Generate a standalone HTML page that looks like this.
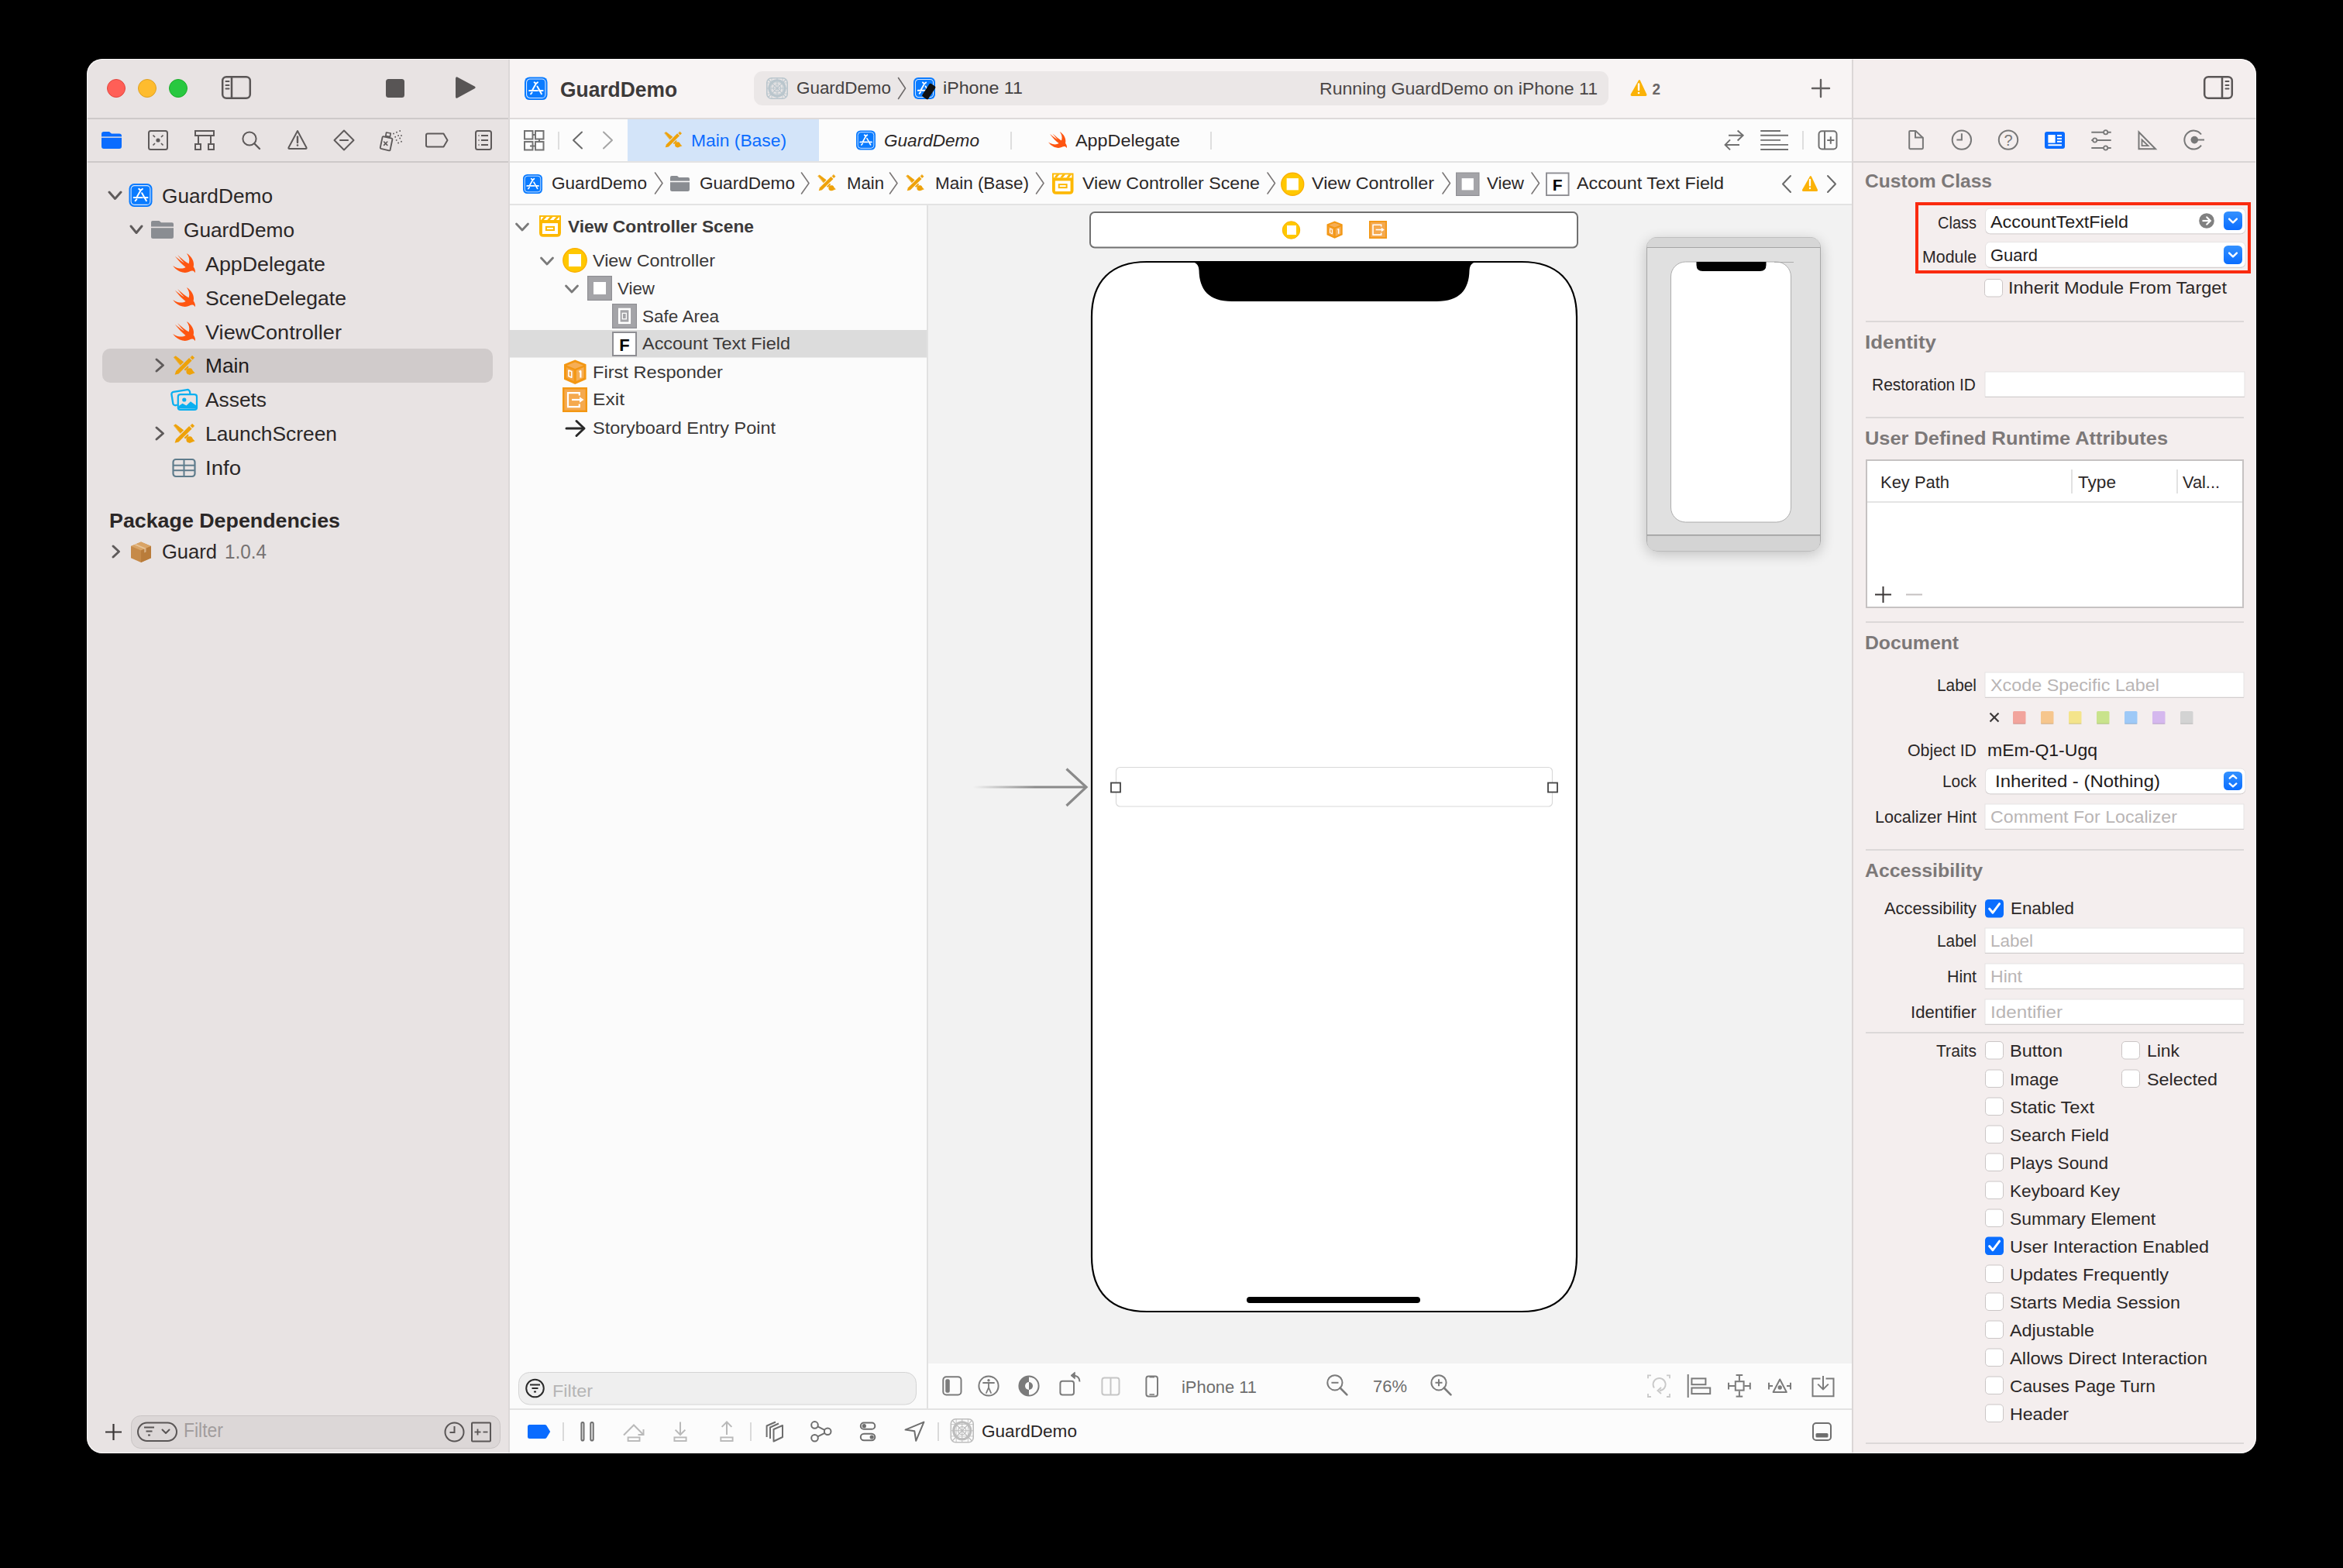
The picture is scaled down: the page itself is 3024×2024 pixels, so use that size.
<!DOCTYPE html><html><head><meta charset="utf-8"><style>
html,body{margin:0;padding:0;background:#000;width:3024px;height:2024px;overflow:hidden}
#win{position:absolute;left:0;top:0;width:3024px;height:2024px;clip-path:inset(76px 112px 148px 112px round 20px)}
svg{position:absolute;left:0;top:0}
text{font-family:"Liberation Sans",sans-serif;white-space:pre}
</style></head><body><div id="win">
<svg width="3024" height="2024" viewBox="0 0 3024 2024">
<defs><linearGradient id="bb" x1="0" y1="0" x2="0" y2="1"><stop offset="0" stop-color="#3391ff"/><stop offset="1" stop-color="#0a6dff"/></linearGradient></defs>
<rect x="112" y="76" width="546" height="1800" fill="#e8e3e3"/>
<rect x="656" y="76" width="2" height="1800" fill="#dcd8d8"/>
<rect x="112" y="152" width="544" height="2" fill="#cdc9c9"/>
<rect x="112" y="208" width="544" height="2" fill="#cdc9c9"/>
<rect x="658" y="76" width="1732" height="76" fill="#f8f4f4"/>
<rect x="658" y="152" width="1732" height="2" fill="#dedada"/>
<rect x="658" y="154" width="1732" height="54" fill="#fcfcfc"/>
<rect x="658" y="208" width="1732" height="2" fill="#e3e3e3"/>
<rect x="658" y="210" width="1732" height="53" fill="#fcfcfc"/>
<rect x="658" y="263" width="1732" height="2" fill="#e3e3e3"/>
<rect x="658" y="265" width="538" height="1553" fill="#fbfbfb"/>
<rect x="1196" y="265" width="2" height="1553" fill="#e1e1e1"/>
<rect x="1198" y="265" width="1192" height="1495" fill="#f2f2f2"/>
<rect x="1198" y="1760" width="1192" height="58" fill="#fcfcfc"/>
<rect x="658" y="1818" width="1732" height="2" fill="#e3e3e3"/>
<rect x="658" y="1820" width="1732" height="56" fill="#fcfcfc"/>
<rect x="2390" y="76" width="2" height="1800" fill="#dbd6d6"/>
<rect x="2392" y="76" width="520" height="1800" fill="#f4eeee"/>
<rect x="2392" y="152" width="520" height="2" fill="#d9d5d5"/>
<rect x="2392" y="208" width="520" height="2" fill="#d9d5d5"/>
<circle cx="150" cy="114" r="11.5" fill="#ff5f57" stroke="#e2463f" stroke-width="1"/>
<circle cx="190" cy="114" r="11.5" fill="#febc2e" stroke="#dfa123" stroke-width="1"/>
<circle cx="230" cy="114" r="11.5" fill="#28c840" stroke="#1dad2b" stroke-width="1"/>
<rect x="287.2" y="99.2" width="35.60000000000002" height="27.599999999999994" fill="none" stroke="#5a5656" stroke-width="2.5" rx="5"/>
<line x1="299" y1="100" x2="299" y2="126" stroke="#5a5656" stroke-width="2.5" stroke-linecap="butt"/>
<line x1="291.5" y1="105" x2="295.5" y2="105" stroke="#5a5656" stroke-width="2" stroke-linecap="round"/>
<line x1="291.5" y1="110" x2="295.5" y2="110" stroke="#5a5656" stroke-width="2" stroke-linecap="round"/>
<line x1="291.5" y1="114.5" x2="295.5" y2="114.5" stroke="#5a5656" stroke-width="2" stroke-linecap="round"/>
<rect x="498" y="102" width="24" height="24" fill="#585555" rx="3.5"/>
<path d="M590.2 99.6 L612.6 111.6 Q614.8 112.9 612.6 114.2 L590.2 126.4 Q588 127.6 588 125 L588 101.8 Q588 98.4 590.2 99.6 Z" fill="#585555"/>
<path d="M131 173 Q131 170 134 170 L141 170 L144 172.5 L154 172.5 Q157 172.5 157 175.5 L157 189 Q157 192 154 192 L134 192 Q131 192 131 189 Z" fill="#0a6cff"/>
<rect x="131" y="176.4" width="26" height="1.4000000000000057" fill="#e8e3e3"/>
<rect x="192" y="169" width="24" height="24" fill="none" stroke="#5e5a5a" stroke-width="2" rx="2.5"/>
<circle cx="204" cy="181" r="2.6" fill="#5e5a5a"/>
<line x1="197.5" y1="174.5" x2="200" y2="177" stroke="#5e5a5a" stroke-width="1.7" stroke-linecap="butt"/>
<line x1="210.5" y1="174.5" x2="208" y2="177" stroke="#5e5a5a" stroke-width="1.7" stroke-linecap="butt"/>
<line x1="197.5" y1="187.5" x2="200" y2="185" stroke="#5e5a5a" stroke-width="1.7" stroke-linecap="butt"/>
<line x1="210.5" y1="187.5" x2="208" y2="185" stroke="#5e5a5a" stroke-width="1.7" stroke-linecap="butt"/>
<rect x="252" y="169" width="24" height="6" fill="none" stroke="#5e5a5a" stroke-width="2"/>
<line x1="256" y1="175" x2="256" y2="185" stroke="#5e5a5a" stroke-width="2" stroke-linecap="butt"/>
<line x1="272" y1="175" x2="272" y2="185" stroke="#5e5a5a" stroke-width="2" stroke-linecap="butt"/>
<rect x="252" y="186" width="7" height="7" fill="none" stroke="#5e5a5a" stroke-width="2"/>
<rect x="269" y="186" width="7" height="7" fill="none" stroke="#5e5a5a" stroke-width="2"/>
<circle cx="322" cy="179" r="8.6" fill="none" stroke="#5e5a5a" stroke-width="2"/>
<line x1="328.5" y1="185.5" x2="335" y2="192" stroke="#5e5a5a" stroke-width="2.4" stroke-linecap="round"/>
<path d="M384 169 L395.5 190.5 Q396 192 394.5 192 L373.5 192 Q372 192 372.5 190.5 Z" fill="none" stroke="#5e5a5a" stroke-width="2" stroke-linecap="round" stroke-linejoin="round"/>
<line x1="384" y1="176.5" x2="384" y2="184" stroke="#5e5a5a" stroke-width="2.4" stroke-linecap="round"/>
<circle cx="384" cy="187.5" r="1.3" fill="#5e5a5a"/>
<path d="M444 168.5 L456.5 181 L444 193.5 L431.5 181 Z" fill="none" stroke="#5e5a5a" stroke-width="2" stroke-linecap="round" stroke-linejoin="round"/>
<line x1="439" y1="181" x2="449" y2="181" stroke="#5e5a5a" stroke-width="2.2" stroke-linecap="round"/>
<path d="M495.2 176.2 L505.6 178.6 Q506.6 178.9 506.4 180 L503.6 193.4 Q503.3 194.6 502.1 194.3 L491.7 191.9 Q490.6 191.6 490.8 190.5 L493.6 177.1 Q493.9 175.9 495.2 176.2 Z" fill="none" stroke="#5e5a5a" stroke-width="1.9" stroke-linecap="round" stroke-linejoin="round"/>
<path d="M498.6 171 L504.2 172 L503.4 176.6 L497.8 175.6 Z" fill="none" stroke="#5e5a5a" stroke-width="1.7" stroke-linecap="round" stroke-linejoin="round"/>
<line x1="495.6" y1="183" x2="499.8" y2="187.4" stroke="#5e5a5a" stroke-width="1.6" stroke-linecap="round"/>
<line x1="499.8" y1="183" x2="495.6" y2="187.4" stroke="#5e5a5a" stroke-width="1.6" stroke-linecap="round"/>
<circle cx="508" cy="172.5" r="0.95" fill="#5e5a5a"/>
<circle cx="512" cy="170.8" r="0.95" fill="#5e5a5a"/>
<circle cx="516.2" cy="169" r="0.95" fill="#5e5a5a"/>
<circle cx="514.1" cy="175" r="0.95" fill="#5e5a5a"/>
<circle cx="518" cy="175" r="0.95" fill="#5e5a5a"/>
<circle cx="510.2" cy="176.7" r="0.95" fill="#5e5a5a"/>
<circle cx="516.2" cy="178.5" r="0.95" fill="#5e5a5a"/>
<circle cx="511.7" cy="180.9" r="0.95" fill="#5e5a5a"/>
<circle cx="518" cy="182.7" r="0.95" fill="#5e5a5a"/>
<circle cx="514.1" cy="184.5" r="0.95" fill="#5e5a5a"/>
<path d="M550 174.5 Q550 172.5 552 172.5 L572.5 172.5 L577.5 181 L572.5 189.5 L552 189.5 Q550 189.5 550 187.5 Z" fill="none" stroke="#5e5a5a" stroke-width="2" stroke-linecap="round" stroke-linejoin="round"/>
<rect x="614" y="169" width="20" height="24" fill="none" stroke="#5e5a5a" stroke-width="2" rx="2.5"/>
<line x1="617.5" y1="175" x2="618.5" y2="175" stroke="#5e5a5a" stroke-width="2" stroke-linecap="butt"/>
<line x1="621" y1="175" x2="630" y2="175" stroke="#5e5a5a" stroke-width="2" stroke-linecap="butt"/>
<line x1="617.5" y1="181" x2="618.5" y2="181" stroke="#5e5a5a" stroke-width="2" stroke-linecap="butt"/>
<line x1="621" y1="181" x2="630" y2="181" stroke="#5e5a5a" stroke-width="2" stroke-linecap="butt"/>
<line x1="617.5" y1="187" x2="618.5" y2="187" stroke="#5e5a5a" stroke-width="2" stroke-linecap="butt"/>
<line x1="621" y1="187" x2="630" y2="187" stroke="#5e5a5a" stroke-width="2" stroke-linecap="butt"/>
<path d="M141 248 L148.5 256.5 L156 248" fill="none" stroke="#5f5b5b" stroke-width="3" stroke-linecap="round" stroke-linejoin="round"/>
<g transform="translate(166.5,237) scale(1.0)">
<rect x="0" y="0" width="30" height="30" fill="#0a7bff" rx="6.5"/>
<rect x="2.6" y="2.6" width="24.799999999999997" height="24.799999999999997" fill="none" stroke="#d8e8ff" stroke-width="1.1" rx="4.5"/>
<path d="M12.8 6.9 L15.1 8.7 L17.3 6.9 M15.1 8.7 L10.6 16.6 M9.8 20.3 L8.2 22.2 M16.7 12.2 L22.3 22.1 M6.2 17.9 L17.2 17.9 M19.3 17.9 L24 17.9" fill="none" stroke="#ffffff" stroke-width="2" stroke-linecap="round" stroke-linejoin="round"/>
</g>
<text x="209" y="262" font-size="26" fill="#2b2727" textLength="143" lengthAdjust="spacingAndGlyphs">GuardDemo</text>
<path d="M169 292 L176.0 300.5 L183 292" fill="none" stroke="#5f5b5b" stroke-width="3" stroke-linecap="round" stroke-linejoin="round"/>
<path d="M195 305.7 L195 287 Q195 285 197 285 L205.44 285 L208.05 287.3 L222 287.3 Q224 287.3 224 289.3 L224 305.5 Q224 308 221.5 308 L197.5 308 Q195 308 195 305.5 Z" fill="#8a8d92"/>
<rect x="195" y="292.59" width="29" height="1.6000000000000227" fill="#e8e3e3"/>
<text x="237" y="306" font-size="26" fill="#2b2727" textLength="143" lengthAdjust="spacingAndGlyphs">GuardDemo</text>
<path d="M13.543 3.41c4.114 2.47 6.545 7.162 5.549 11.131-.024.093-.05.181-.076.272l.002.001c2.062 2.538 1.5 5.258 1.236 4.745-1.072-2.086-3.066-1.568-4.088-1.043a6.803 6.803 0 0 1-.281.158l-.02.012-.002.002c-2.115 1.123-4.957 1.205-7.812-.022a12.568 12.568 0 0 1-5.640-4.838c.649.48 1.35.902 2.097 1.252 3.019 1.414 6.051 1.311 8.197-.002C9.651 12.730 7.101 9.670 5.146 7.191a10.628 10.628 0 0 1-1.005-1.384c2.340 2.142 6.038 4.830 7.365 5.576C8.690 8.408 6.208 4.743 6.324 4.860c4.436 4.470 8.528 6.996 8.528 6.996.154.085.270.154.360.213.085-.215.160-.437.224-.668.708-2.588-.090-5.548-1.893-7.992z" fill="#fe5511" transform="translate(219.37,321.74) scale(1.5897,1.5420)"/>
<text x="265" y="350" font-size="26" fill="#2b2727" textLength="155" lengthAdjust="spacingAndGlyphs">AppDelegate</text>
<path d="M13.543 3.41c4.114 2.47 6.545 7.162 5.549 11.131-.024.093-.05.181-.076.272l.002.001c2.062 2.538 1.5 5.258 1.236 4.745-1.072-2.086-3.066-1.568-4.088-1.043a6.803 6.803 0 0 1-.281.158l-.02.012-.002.002c-2.115 1.123-4.957 1.205-7.812-.022a12.568 12.568 0 0 1-5.640-4.838c.649.48 1.35.902 2.097 1.252 3.019 1.414 6.051 1.311 8.197-.002C9.651 12.730 7.101 9.670 5.146 7.191a10.628 10.628 0 0 1-1.005-1.384c2.340 2.142 6.038 4.830 7.365 5.576C8.690 8.408 6.208 4.743 6.324 4.860c4.436 4.470 8.528 6.996 8.528 6.996.154.085.270.154.360.213.085-.215.160-.437.224-.668.708-2.588-.090-5.548-1.893-7.992z" fill="#fe5511" transform="translate(219.37,365.74) scale(1.5897,1.5420)"/>
<text x="265" y="394" font-size="26" fill="#2b2727" textLength="182" lengthAdjust="spacingAndGlyphs">SceneDelegate</text>
<path d="M13.543 3.41c4.114 2.47 6.545 7.162 5.549 11.131-.024.093-.05.181-.076.272l.002.001c2.062 2.538 1.5 5.258 1.236 4.745-1.072-2.086-3.066-1.568-4.088-1.043a6.803 6.803 0 0 1-.281.158l-.02.012-.002.002c-2.115 1.123-4.957 1.205-7.812-.022a12.568 12.568 0 0 1-5.640-4.838c.649.48 1.35.902 2.097 1.252 3.019 1.414 6.051 1.311 8.197-.002C9.651 12.730 7.101 9.670 5.146 7.191a10.628 10.628 0 0 1-1.005-1.384c2.340 2.142 6.038 4.830 7.365 5.576C8.690 8.408 6.208 4.743 6.324 4.860c4.436 4.470 8.528 6.996 8.528 6.996.154.085.270.154.360.213.085-.215.160-.437.224-.668.708-2.588-.090-5.548-1.893-7.992z" fill="#fe5511" transform="translate(219.37,409.74) scale(1.5897,1.5420)"/>
<text x="265" y="438" font-size="26" fill="#2b2727" textLength="176" lengthAdjust="spacingAndGlyphs">ViewController</text>
<rect x="132" y="450" width="504" height="44" fill="#d0cbcb" rx="10"/>
<path d="M202 464 L210.5 471.5 L202 479" fill="none" stroke="#5f5b5b" stroke-width="3" stroke-linecap="round" stroke-linejoin="round"/>
<g transform="translate(224.7,459.8) scale(1.0)">
<path d="M0 1.3 L2.1 0 L12.3 7.8 L8.5 11.6 Z" fill="#eea20a" stroke="#eea20a" stroke-width="0.8" stroke-linecap="round" stroke-linejoin="round"/>
<path d="M23.6 -0.5 L26.1 2 L23.6 4.5 L21.1 2 Z" fill="#eea20a" stroke="#eea20a" stroke-width="0.6" stroke-linecap="round" stroke-linejoin="round"/>
<path d="M14.4 17.0 L17.3 14.0" fill="none" stroke="#eea20a" stroke-width="2.8" stroke-linecap="round" stroke-linejoin="round"/>
<path d="M2.34 19.23 L19.44 2.23 L22.96 5.77 L5.86 22.77 L0.9 23.9 Z" fill="#eea20a" stroke="#d0cbcb" stroke-width="2.2" stroke-linecap="round" stroke-linejoin="round" paint-order="stroke"/>
<circle cx="19.8" cy="19.6" r="4.1" fill="#eea20a"/>
<path d="M21.6 16.2 L26.4 21.5 L20 23.6 Z" fill="#eea20a" stroke="#eea20a" stroke-width="0.6" stroke-linecap="round" stroke-linejoin="round"/>
</g>
<text x="265" y="481" font-size="26" fill="#1f1b1b" textLength="57" lengthAdjust="spacingAndGlyphs">Main</text>
<text x="265" y="525" font-size="26" fill="#2b2727" textLength="79" lengthAdjust="spacingAndGlyphs">Assets</text>
<path d="M202 552 L210.5 559.5 L202 567" fill="none" stroke="#5f5b5b" stroke-width="3" stroke-linecap="round" stroke-linejoin="round"/>
<g transform="translate(224.7,547.8) scale(1.0)">
<path d="M0 1.3 L2.1 0 L12.3 7.8 L8.5 11.6 Z" fill="#eea20a" stroke="#eea20a" stroke-width="0.8" stroke-linecap="round" stroke-linejoin="round"/>
<path d="M23.6 -0.5 L26.1 2 L23.6 4.5 L21.1 2 Z" fill="#eea20a" stroke="#eea20a" stroke-width="0.6" stroke-linecap="round" stroke-linejoin="round"/>
<path d="M14.4 17.0 L17.3 14.0" fill="none" stroke="#eea20a" stroke-width="2.8" stroke-linecap="round" stroke-linejoin="round"/>
<path d="M2.34 19.23 L19.44 2.23 L22.96 5.77 L5.86 22.77 L0.9 23.9 Z" fill="#eea20a" stroke="#e8e3e3" stroke-width="2.2" stroke-linecap="round" stroke-linejoin="round" paint-order="stroke"/>
<circle cx="19.8" cy="19.6" r="4.1" fill="#eea20a"/>
<path d="M21.6 16.2 L26.4 21.5 L20 23.6 Z" fill="#eea20a" stroke="#eea20a" stroke-width="0.6" stroke-linecap="round" stroke-linejoin="round"/>
</g>
<text x="265" y="569" font-size="26" fill="#2b2727" textLength="170" lengthAdjust="spacingAndGlyphs">LaunchScreen</text>
<text x="265" y="613" font-size="26" fill="#2b2727" textLength="46" lengthAdjust="spacingAndGlyphs">Info</text>
<text x="141" y="681" font-size="26" fill="#2b2727" font-weight="700" textLength="298" lengthAdjust="spacingAndGlyphs">Package Dependencies</text>
<path d="M146 705 L153.5 712.0 L146 719" fill="none" stroke="#5f5b5b" stroke-width="3" stroke-linecap="round" stroke-linejoin="round"/>
<text x="209" y="721" font-size="26" fill="#2b2727" textLength="71" lengthAdjust="spacingAndGlyphs">Guard</text>
<text x="290" y="721" font-size="26" fill="#767272" textLength="54" lengthAdjust="spacingAndGlyphs">1.0.4</text>
<g transform="translate(677,99.5) scale(0.9833333333333333)">
<rect x="0" y="0" width="30" height="30" fill="#0a7bff" rx="6.5"/>
<rect x="2.6" y="2.6" width="24.799999999999997" height="24.799999999999997" fill="none" stroke="#d8e8ff" stroke-width="1.1" rx="4.5"/>
<path d="M12.8 6.9 L15.1 8.7 L17.3 6.9 M15.1 8.7 L10.6 16.6 M9.8 20.3 L8.2 22.2 M16.7 12.2 L22.3 22.1 M6.2 17.9 L17.2 17.9 M19.3 17.9 L24 17.9" fill="none" stroke="#ffffff" stroke-width="2" stroke-linecap="round" stroke-linejoin="round"/>
</g>
<text x="723" y="125" font-size="27" fill="#3d3a3a" font-weight="700" textLength="151" lengthAdjust="spacingAndGlyphs">GuardDemo</text>
<rect x="973" y="92" width="1103" height="44" fill="#ebe7e7" rx="11"/>
<rect x="989.8" y="100.8" width="26.40000000000009" height="26.400000000000006" fill="none" stroke="#bac6cd" stroke-width="1.6" rx="6"/>
<circle cx="1003.0" cy="114.0" r="10.08" fill="none" stroke="#bac6cd" stroke-width="3.2"/>
<circle cx="1003.0" cy="114.0" r="4.760000000000001" fill="none" stroke="#bac6cd" stroke-width="1.2"/>
<line x1="992" y1="103" x2="1014" y2="125" stroke="#bac6cd" stroke-width="1.2" stroke-linecap="round"/>
<line x1="1014" y1="103" x2="992" y2="125" stroke="#bac6cd" stroke-width="1.2" stroke-linecap="round"/>
<line x1="1003.0" y1="101" x2="1003.0" y2="127" stroke="#bac6cd" stroke-width="1" stroke-linecap="round"/>
<line x1="990" y1="114.0" x2="1016" y2="114.0" stroke="#bac6cd" stroke-width="1" stroke-linecap="round"/>
<line x1="996.0" y1="101" x2="996.0" y2="127" stroke="#bac6cd" stroke-width="0.9" stroke-linecap="round"/>
<line x1="1010.0" y1="101" x2="1010.0" y2="127" stroke="#bac6cd" stroke-width="0.9" stroke-linecap="round"/>
<line x1="990" y1="107.0" x2="1016" y2="107.0" stroke="#bac6cd" stroke-width="0.9" stroke-linecap="round"/>
<line x1="990" y1="121.0" x2="1016" y2="121.0" stroke="#bac6cd" stroke-width="0.9" stroke-linecap="round"/>
<text x="1028" y="121" font-size="22" fill="#434040" textLength="122" lengthAdjust="spacingAndGlyphs">GuardDemo</text>
<path d="M1159.5 100.5 L1168.5 114 L1159.5 127.5" fill="none" stroke="#6f6b6b" stroke-width="1.6" stroke-linecap="round" stroke-linejoin="round"/>
<g transform="translate(1179,100) scale(0.9333333333333333)">
<rect x="0" y="0" width="30" height="30" fill="#0a7bff" rx="6.5"/>
<rect x="2.6" y="2.6" width="24.799999999999997" height="24.799999999999997" fill="none" stroke="#d8e8ff" stroke-width="1.1" rx="4.5"/>
<path d="M12.8 6.9 L15.1 8.7 L17.3 6.9 M15.1 8.7 L10.6 16.6 M9.8 20.3 L8.2 22.2 M16.7 12.2 L22.3 22.1 M6.2 17.9 L17.2 17.9 M19.3 17.9 L24 17.9" fill="none" stroke="#ffffff" stroke-width="2" stroke-linecap="round" stroke-linejoin="round"/>
</g>
<g transform="translate(1198.8,118) rotate(33)"><rect x="-4.6" y="-10" width="9.2" height="20" rx="1.8" fill="#111"/></g>
<text x="1217" y="121" font-size="22" fill="#434040" textLength="103" lengthAdjust="spacingAndGlyphs">iPhone 11</text>
<text x="1703" y="122" font-size="22" fill="#4a4646" textLength="359" lengthAdjust="spacingAndGlyphs">Running GuardDemo on iPhone 11</text>
<path d="M2115 103.5 Q2116 102.5 2117 104 L2125.2 121.5 Q2126 124 2123.5 124 L2106.5 124 Q2104 124 2104.8 121.5 Z" fill="#fbb207"/>
<path d="M2115 108.5 L2115 116" fill="none" stroke="#fff" stroke-width="2.4" stroke-linecap="round" stroke-linejoin="round"/>
<circle cx="2115" cy="120" r="1.3" fill="#fff"/>
<text x="2132.5" y="122" font-size="21" fill="#6a6666" font-weight="700" textLength="10.5" lengthAdjust="spacingAndGlyphs">2</text>
<line x1="2350" y1="103" x2="2350" y2="125" stroke="#636060" stroke-width="2.4" stroke-linecap="round"/>
<line x1="2339" y1="114" x2="2361" y2="114" stroke="#636060" stroke-width="2.4" stroke-linecap="round"/>
<rect x="2845.2" y="99.2" width="35.600000000000364" height="27.599999999999994" fill="none" stroke="#5a5656" stroke-width="2.5" rx="5"/>
<line x1="2868" y1="100" x2="2868" y2="126" stroke="#5a5656" stroke-width="2.5" stroke-linecap="butt"/>
<line x1="2872.5" y1="105" x2="2876.5" y2="105" stroke="#5a5656" stroke-width="2" stroke-linecap="round"/>
<line x1="2872.5" y1="110" x2="2876.5" y2="110" stroke="#5a5656" stroke-width="2" stroke-linecap="round"/>
<line x1="2872.5" y1="114.5" x2="2876.5" y2="114.5" stroke="#5a5656" stroke-width="2" stroke-linecap="round"/>
<rect x="677" y="169" width="10.5" height="10.5" fill="none" stroke="#737373" stroke-width="2"/>
<rect x="691" y="169" width="10.5" height="10.5" fill="none" stroke="#737373" stroke-width="2"/>
<rect x="677" y="183" width="10.5" height="10.5" fill="none" stroke="#737373" stroke-width="2"/>
<rect x="691" y="183" width="10.5" height="10.5" fill="none" stroke="#737373" stroke-width="2"/>
<line x1="687.5" y1="174" x2="692" y2="174" stroke="#737373" stroke-width="2" stroke-linecap="butt"/>
<line x1="696" y1="179.5" x2="696" y2="184" stroke="#737373" stroke-width="2" stroke-linecap="butt"/>
<line x1="684" y1="188.5" x2="691" y2="188.5" stroke="#737373" stroke-width="2" stroke-linecap="butt"/>
<rect x="720" y="170" width="2" height="23" fill="#dedede"/>
<path d="M751 170.5 L740 181 L751 191.5" fill="none" stroke="#6a6a6a" stroke-width="2" stroke-linecap="round" stroke-linejoin="round"/>
<path d="M779 170.5 L790 181 L779 191.5" fill="none" stroke="#a5a5a5" stroke-width="2" stroke-linecap="round" stroke-linejoin="round"/>
<rect x="810" y="154" width="247" height="54" fill="#d3e4f9"/>
<g transform="translate(858,170.5) scale(0.8301886792452831)">
<path d="M0 1.3 L2.1 0 L12.3 7.8 L8.5 11.6 Z" fill="#eea20a" stroke="#eea20a" stroke-width="0.8" stroke-linecap="round" stroke-linejoin="round"/>
<path d="M23.6 -0.5 L26.1 2 L23.6 4.5 L21.1 2 Z" fill="#eea20a" stroke="#eea20a" stroke-width="0.6" stroke-linecap="round" stroke-linejoin="round"/>
<path d="M14.4 17.0 L17.3 14.0" fill="none" stroke="#eea20a" stroke-width="2.8" stroke-linecap="round" stroke-linejoin="round"/>
<path d="M2.34 19.23 L19.44 2.23 L22.96 5.77 L5.86 22.77 L0.9 23.9 Z" fill="#eea20a" stroke="#d3e4f9" stroke-width="2.2" stroke-linecap="round" stroke-linejoin="round" paint-order="stroke"/>
<circle cx="19.8" cy="19.6" r="4.1" fill="#eea20a"/>
<path d="M21.6 16.2 L26.4 21.5 L20 23.6 Z" fill="#eea20a" stroke="#eea20a" stroke-width="0.6" stroke-linecap="round" stroke-linejoin="round"/>
</g>
<text x="892" y="189" font-size="22" fill="#0a6cff" textLength="123" lengthAdjust="spacingAndGlyphs">Main (Base)</text>
<g transform="translate(1105,168.5) scale(0.8333333333333334)">
<rect x="0" y="0" width="30" height="30" fill="#0a7bff" rx="6.5"/>
<rect x="2.6" y="2.6" width="24.799999999999997" height="24.799999999999997" fill="none" stroke="#d8e8ff" stroke-width="1.1" rx="4.5"/>
<path d="M12.8 6.9 L15.1 8.7 L17.3 6.9 M15.1 8.7 L10.6 16.6 M9.8 20.3 L8.2 22.2 M16.7 12.2 L22.3 22.1 M6.2 17.9 L17.2 17.9 M19.3 17.9 L24 17.9" fill="none" stroke="#ffffff" stroke-width="2" stroke-linecap="round" stroke-linejoin="round"/>
</g>
<text x="1141" y="189" font-size="22" fill="#2b2727" font-style="italic" textLength="123" lengthAdjust="spacingAndGlyphs">GuardDemo</text>
<rect x="1304" y="170" width="2" height="23" fill="#dedede"/>
<path d="M13.543 3.41c4.114 2.47 6.545 7.162 5.549 11.131-.024.093-.05.181-.076.272l.002.001c2.062 2.538 1.5 5.258 1.236 4.745-1.072-2.086-3.066-1.568-4.088-1.043a6.803 6.803 0 0 1-.281.158l-.02.012-.002.002c-2.115 1.123-4.957 1.205-7.812-.022a12.568 12.568 0 0 1-5.640-4.838c.649.48 1.35.902 2.097 1.252 3.019 1.414 6.051 1.311 8.197-.002C9.651 12.730 7.101 9.670 5.146 7.191a10.628 10.628 0 0 1-1.005-1.384c2.340 2.142 6.038 4.830 7.365 5.576C8.690 8.408 6.208 4.743 6.324 4.860c4.436 4.470 8.528 6.996 8.528 6.996.154.085.270.154.360.213.085-.215.160-.437.224-.668.708-2.588-.090-5.548-1.893-7.992z" fill="#fe5511" transform="translate(1349.81,165.58) scale(1.3247,1.2953)"/>
<text x="1388" y="189" font-size="22" fill="#2b2727" textLength="135" lengthAdjust="spacingAndGlyphs">AppDelegate</text>
<rect x="1562" y="170" width="2" height="23" fill="#dedede"/>
<line x1="2231" y1="174.8" x2="2249.6" y2="174.8" stroke="#707070" stroke-width="2" stroke-linecap="butt"/>
<path d="M2242.6 168.4 L2249.6 174.8 L2242.6 181.4" fill="none" stroke="#707070" stroke-width="2" stroke-linecap="butt" stroke-linejoin="miter"/>
<line x1="2227" y1="186.9" x2="2245" y2="186.9" stroke="#707070" stroke-width="2" stroke-linecap="butt"/>
<path d="M2233 180.4 L2226.6 186.9 L2233 193.4" fill="none" stroke="#707070" stroke-width="2" stroke-linecap="butt" stroke-linejoin="miter"/>
<line x1="2272.2" y1="169" x2="2298" y2="169" stroke="#707070" stroke-width="1.9" stroke-linecap="butt"/>
<line x1="2272.2" y1="174.8" x2="2308" y2="174.8" stroke="#707070" stroke-width="1.9" stroke-linecap="butt"/>
<line x1="2272.2" y1="180.9" x2="2298" y2="180.9" stroke="#707070" stroke-width="1.9" stroke-linecap="butt"/>
<line x1="2272.2" y1="186.9" x2="2308" y2="186.9" stroke="#707070" stroke-width="1.9" stroke-linecap="butt"/>
<line x1="2272.2" y1="193" x2="2308" y2="193" stroke="#707070" stroke-width="1.9" stroke-linecap="butt"/>
<rect x="2326" y="169" width="2" height="24" fill="#dedede"/>
<rect x="2347.5" y="169.3" width="23.0" height="23.19999999999999" fill="none" stroke="#707070" stroke-width="2" rx="4"/>
<line x1="2355" y1="169.5" x2="2355" y2="192.5" stroke="#707070" stroke-width="2" stroke-linecap="butt"/>
<line x1="2358.2" y1="181" x2="2367.4" y2="181" stroke="#707070" stroke-width="2" stroke-linecap="butt"/>
<line x1="2362.8" y1="176.3" x2="2362.8" y2="185.7" stroke="#707070" stroke-width="2" stroke-linecap="butt"/>
<g transform="translate(675,225) scale(0.8333333333333334)">
<rect x="0" y="0" width="30" height="30" fill="#0a7bff" rx="6.5"/>
<rect x="2.6" y="2.6" width="24.799999999999997" height="24.799999999999997" fill="none" stroke="#d8e8ff" stroke-width="1.1" rx="4.5"/>
<path d="M12.8 6.9 L15.1 8.7 L17.3 6.9 M15.1 8.7 L10.6 16.6 M9.8 20.3 L8.2 22.2 M16.7 12.2 L22.3 22.1 M6.2 17.9 L17.2 17.9 M19.3 17.9 L24 17.9" fill="none" stroke="#ffffff" stroke-width="2" stroke-linecap="round" stroke-linejoin="round"/>
</g>
<text x="712" y="243.5" font-size="22" fill="#2b2727" textLength="123" lengthAdjust="spacingAndGlyphs">GuardDemo</text>
<path d="M845.5 223 L855.0 236.5 L845.5 250" fill="none" stroke="#7a7676" stroke-width="1.6" stroke-linecap="round" stroke-linejoin="round"/>
<path d="M865 245.0 L865 229 Q865 227 867 227 L874.0 227 L876.25 229.0 L888 229.0 Q890 229.0 890 231.0 L890 244.5 Q890 247 887.5 247 L867.5 247 Q865 247 865 244.5 Z" fill="#8a8d92"/>
<rect x="865" y="233.6" width="25" height="1.5999999999999943" fill="#fbfbfb"/>
<text x="903" y="243.5" font-size="22" fill="#2b2727" textLength="123" lengthAdjust="spacingAndGlyphs">GuardDemo</text>
<path d="M1034.5 223 L1044.0 236.5 L1034.5 250" fill="none" stroke="#7a7676" stroke-width="1.6" stroke-linecap="round" stroke-linejoin="round"/>
<g transform="translate(1056,226) scale(0.8490566037735849)">
<path d="M0 1.3 L2.1 0 L12.3 7.8 L8.5 11.6 Z" fill="#eea20a" stroke="#eea20a" stroke-width="0.8" stroke-linecap="round" stroke-linejoin="round"/>
<path d="M23.6 -0.5 L26.1 2 L23.6 4.5 L21.1 2 Z" fill="#eea20a" stroke="#eea20a" stroke-width="0.6" stroke-linecap="round" stroke-linejoin="round"/>
<path d="M14.4 17.0 L17.3 14.0" fill="none" stroke="#eea20a" stroke-width="2.8" stroke-linecap="round" stroke-linejoin="round"/>
<path d="M2.34 19.23 L19.44 2.23 L22.96 5.77 L5.86 22.77 L0.9 23.9 Z" fill="#eea20a" stroke="#fbfbfb" stroke-width="2.2" stroke-linecap="round" stroke-linejoin="round" paint-order="stroke"/>
<circle cx="19.8" cy="19.6" r="4.1" fill="#eea20a"/>
<path d="M21.6 16.2 L26.4 21.5 L20 23.6 Z" fill="#eea20a" stroke="#eea20a" stroke-width="0.6" stroke-linecap="round" stroke-linejoin="round"/>
</g>
<text x="1093" y="243.5" font-size="22" fill="#2b2727" textLength="48" lengthAdjust="spacingAndGlyphs">Main</text>
<path d="M1148.5 223 L1158.0 236.5 L1148.5 250" fill="none" stroke="#7a7676" stroke-width="1.6" stroke-linecap="round" stroke-linejoin="round"/>
<g transform="translate(1170,226) scale(0.8490566037735849)">
<path d="M0 1.3 L2.1 0 L12.3 7.8 L8.5 11.6 Z" fill="#eea20a" stroke="#eea20a" stroke-width="0.8" stroke-linecap="round" stroke-linejoin="round"/>
<path d="M23.6 -0.5 L26.1 2 L23.6 4.5 L21.1 2 Z" fill="#eea20a" stroke="#eea20a" stroke-width="0.6" stroke-linecap="round" stroke-linejoin="round"/>
<path d="M14.4 17.0 L17.3 14.0" fill="none" stroke="#eea20a" stroke-width="2.8" stroke-linecap="round" stroke-linejoin="round"/>
<path d="M2.34 19.23 L19.44 2.23 L22.96 5.77 L5.86 22.77 L0.9 23.9 Z" fill="#eea20a" stroke="#fbfbfb" stroke-width="2.2" stroke-linecap="round" stroke-linejoin="round" paint-order="stroke"/>
<circle cx="19.8" cy="19.6" r="4.1" fill="#eea20a"/>
<path d="M21.6 16.2 L26.4 21.5 L20 23.6 Z" fill="#eea20a" stroke="#eea20a" stroke-width="0.6" stroke-linecap="round" stroke-linejoin="round"/>
</g>
<text x="1207" y="243.5" font-size="22" fill="#2b2727" textLength="121" lengthAdjust="spacingAndGlyphs">Main (Base)</text>
<path d="M1337.5 223 L1347.0 236.5 L1337.5 250" fill="none" stroke="#7a7676" stroke-width="1.6" stroke-linecap="round" stroke-linejoin="round"/>
<g transform="translate(1358,223.5) scale(0.9821428571428571)">
<path d="M0 0 L28 0 L28 22.5 Q28 27.8 22.7 27.8 L5.3 27.8 Q0 27.8 0 22.5 Z" fill="#fdb800"/>
<rect x="1.9" y="1.9" width="24.0" height="4.1" fill="#ffffff"/>
<path d="M2.4 6 L5.8 6 L9.6 1.9 L5.699999999999999 1.9 Z" fill="#fdb800"/>
<path d="M10.3 6 L13.700000000000001 6 L17.5 1.9 L13.600000000000001 1.9 Z" fill="#fdb800"/>
<path d="M18.5 6 L21.9 6 L25.7 1.9 L21.8 1.9 Z" fill="#fdb800"/>
<rect x="3.9" y="10.1" width="20.1" height="13.9" fill="#ffffff"/>
<rect x="8.9" y="14.9" width="10.1" height="4.1" fill="none" stroke="#fdb800" stroke-width="2"/>
</g>
<text x="1397" y="243.5" font-size="22" fill="#2b2727" textLength="229" lengthAdjust="spacingAndGlyphs">View Controller Scene</text>
<path d="M1636 223 L1645.5 236.5 L1636 250" fill="none" stroke="#7a7676" stroke-width="1.6" stroke-linecap="round" stroke-linejoin="round"/>
<g transform="translate(1653,222.5) scale(0.953125)">
<circle cx="16" cy="16" r="15.2" fill="#ffc800" stroke="#fbb000" stroke-width="1.4"/>
<rect x="8" y="8" width="16" height="16" fill="#ffffff"/>
</g>
<text x="1693" y="243.5" font-size="22" fill="#2b2727" textLength="158" lengthAdjust="spacingAndGlyphs">View Controller</text>
<path d="M1862 223 L1871.5 236.5 L1862 250" fill="none" stroke="#7a7676" stroke-width="1.6" stroke-linecap="round" stroke-linejoin="round"/>
<g transform="translate(1879,222.5) scale(0.953125)">
<rect x="0.6" y="0.6" width="30.799999999999997" height="30.799999999999997" fill="#a4a4a8" stroke="#8f8f94" stroke-width="1.2"/>
<rect x="8" y="8" width="16" height="16" fill="#ffffff"/>
</g>
<text x="1919" y="243.5" font-size="22" fill="#2b2727" textLength="48" lengthAdjust="spacingAndGlyphs">View</text>
<path d="M1977 223 L1986.5 236.5 L1977 250" fill="none" stroke="#7a7676" stroke-width="1.6" stroke-linecap="round" stroke-linejoin="round"/>
<g transform="translate(1995,222.5) scale(0.953125)">
<rect x="1" y="1" width="30" height="30" fill="#ffffff" stroke="#8e8e93" stroke-width="2"/>
<text x="16" y="24.5" font-size="22" font-weight="700" fill="#000" text-anchor="middle">F</text>
</g>
<text x="2035" y="243.5" font-size="22" fill="#2b2727" textLength="190" lengthAdjust="spacingAndGlyphs">Account Text Field</text>
<path d="M2311 227 L2301 237.5 L2311 248" fill="none" stroke="#6a6a6a" stroke-width="2" stroke-linecap="round" stroke-linejoin="round"/>
<path d="M2336 227.5 Q2337 226.5 2338 228 L2346 245 Q2346.6 247 2344.5 247 L2327.5 247 Q2325.4 247 2326 245 Z" fill="#fbb207"/>
<path d="M2336 232 L2336 239.5" fill="none" stroke="#fff" stroke-width="2.3" stroke-linecap="round" stroke-linejoin="round"/>
<circle cx="2336" cy="243" r="1.2" fill="#fff"/>
<path d="M2359 227 L2369 237.5 L2359 248" fill="none" stroke="#6a6a6a" stroke-width="2" stroke-linecap="round" stroke-linejoin="round"/>
<path d="M666.5 289 L674.0 297 L681.5 289" fill="none" stroke="#7a7a7a" stroke-width="2.8" stroke-linecap="round" stroke-linejoin="round"/>
<g transform="translate(696,278) scale(1.0)">
<path d="M0 0 L28 0 L28 22.5 Q28 27.8 22.7 27.8 L5.3 27.8 Q0 27.8 0 22.5 Z" fill="#fdb800"/>
<rect x="1.9" y="1.9" width="24.0" height="4.1" fill="#ffffff"/>
<path d="M2.4 6 L5.8 6 L9.6 1.9 L5.699999999999999 1.9 Z" fill="#fdb800"/>
<path d="M10.3 6 L13.700000000000001 6 L17.5 1.9 L13.600000000000001 1.9 Z" fill="#fdb800"/>
<path d="M18.5 6 L21.9 6 L25.7 1.9 L21.8 1.9 Z" fill="#fdb800"/>
<rect x="3.9" y="10.1" width="20.1" height="13.9" fill="#ffffff"/>
<rect x="8.9" y="14.9" width="10.1" height="4.1" fill="none" stroke="#fdb800" stroke-width="2"/>
</g>
<text x="733" y="300" font-size="22" fill="#3c3a3a" font-weight="700" textLength="240" lengthAdjust="spacingAndGlyphs">View Controller Scene</text>
<path d="M698.5 333 L706.0 341 L713.5 333" fill="none" stroke="#7a7a7a" stroke-width="2.8" stroke-linecap="round" stroke-linejoin="round"/>
<g transform="translate(726,320) scale(1.0)">
<circle cx="16" cy="16" r="15.2" fill="#ffc800" stroke="#fbb000" stroke-width="1.4"/>
<rect x="8" y="8" width="16" height="16" fill="#ffffff"/>
</g>
<text x="765" y="344" font-size="22" fill="#3a3838" textLength="158" lengthAdjust="spacingAndGlyphs">View Controller</text>
<path d="M730.5 369 L738.0 377 L745.5 369" fill="none" stroke="#7a7a7a" stroke-width="2.8" stroke-linecap="round" stroke-linejoin="round"/>
<g transform="translate(758,356) scale(1.0)">
<rect x="0.6" y="0.6" width="30.799999999999997" height="30.799999999999997" fill="#a4a4a8" stroke="#8f8f94" stroke-width="1.2"/>
<rect x="8" y="8" width="16" height="16" fill="#ffffff"/>
</g>
<text x="797" y="380" font-size="22" fill="#3a3838" textLength="48" lengthAdjust="spacingAndGlyphs">View</text>
<g transform="translate(790,392) scale(1.0)">
<rect x="0.6" y="0.6" width="30.799999999999997" height="30.799999999999997" fill="#a4a4a8" stroke="#8f8f94" stroke-width="1.2"/>
<rect x="9.3" y="7" width="13.399999999999999" height="17.8" fill="none" stroke="#ffffff" stroke-width="2.6"/>
<rect x="13.3" y="12.3" width="5.0" height="7.5" fill="none" stroke="#ffffff" stroke-width="1.3"/>
</g>
<text x="829" y="416" font-size="22" fill="#3a3838" textLength="99" lengthAdjust="spacingAndGlyphs">Safe Area</text>
<rect x="658" y="426" width="538" height="35.5" fill="#dcdcdc"/>
<g transform="translate(790,428) scale(1.0)">
<rect x="1" y="1" width="30" height="30" fill="#ffffff" stroke="#8e8e93" stroke-width="2"/>
<text x="16" y="24.5" font-size="22" font-weight="700" fill="#000" text-anchor="middle">F</text>
</g>
<text x="829" y="451" font-size="22" fill="#3a3838" textLength="191" lengthAdjust="spacingAndGlyphs">Account Text Field</text>
<g transform="translate(728,464.5) scale(1.0)">
<path d="M14.2 0 L28.5 5.8 L28.5 25.2 L14.2 31.5 L0 25.2 L0 5.8 Z" fill="#f39712"/>
<path d="M14.2 3 L25 7.2 L14.2 11.4 L3.4 7.2 Z" fill="#f6ae55"/>
<path d="M15.8 13.4 L25.6 9.4 L25.6 23 L15.8 27.6 Z" fill="#f6ae55"/>
<path d="M3 9.4 L12.6 13.4 L12.6 27.6 L3 23 Z" fill="#f5a543"/>
<path d="M5.8 13.5 L9.8 15 L9.8 22.8 L5.8 21 Z" fill="none" stroke="#fff" stroke-width="1.5" stroke-linecap="round" stroke-linejoin="round"/>
<path d="M19.5 15.5 L21.4 14.5 L21.4 23" fill="none" stroke="#fff" stroke-width="2.1" stroke-linecap="butt" stroke-linejoin="round"/>
</g>
<text x="765" y="488" font-size="22" fill="#3a3838" textLength="168" lengthAdjust="spacingAndGlyphs">First Responder</text>
<g transform="translate(726,500) scale(1.0)">
<rect x="1.2" y="1.2" width="29.6" height="29.6" fill="#f5a94e" stroke="#f39712" stroke-width="2.4"/>
<path d="M21.8 10.5 L21.8 7.2 L7 7.2 L7 25.2 L21.8 25.2 L21.8 21.5" fill="none" stroke="#fff" stroke-width="2.2" stroke-linecap="butt" stroke-linejoin="miter"/>
<line x1="12" y1="16" x2="24" y2="16" stroke="#fff" stroke-width="2.2" stroke-linecap="butt"/>
<path d="M22 12.2 L27.5 16 L22 19.8 Z" fill="#fff"/>
</g>
<text x="765" y="523" font-size="22" fill="#3a3838" textLength="41" lengthAdjust="spacingAndGlyphs">Exit</text>
<line x1="731" y1="553" x2="753" y2="553" stroke="#2a2a2a" stroke-width="3" stroke-linecap="round"/>
<path d="M744 543.5 L754 553 L744 562.5" fill="none" stroke="#2a2a2a" stroke-width="3" stroke-linecap="round" stroke-linejoin="round"/>
<text x="765" y="560" font-size="22" fill="#3a3838" textLength="236" lengthAdjust="spacingAndGlyphs">Storyboard Entry Point</text>
<rect x="1407" y="274" width="629" height="45.5" fill="#ffffff" stroke="#707070" stroke-width="2" rx="6"/>
<circle cx="1666.5" cy="297" r="11.2" fill="#ffc800" stroke="#fbb000" stroke-width="1"/>
<rect x="1661" y="291" width="12" height="12" fill="#ffffff"/>
<g transform="translate(1712.5,285.5) scale(0.7087719298245614)">
<path d="M14.2 0 L28.5 5.8 L28.5 25.2 L14.2 31.5 L0 25.2 L0 5.8 Z" fill="#f39712"/>
<path d="M14.2 3 L25 7.2 L14.2 11.4 L3.4 7.2 Z" fill="#f6ae55"/>
<path d="M15.8 13.4 L25.6 9.4 L25.6 23 L15.8 27.6 Z" fill="#f6ae55"/>
<path d="M3 9.4 L12.6 13.4 L12.6 27.6 L3 23 Z" fill="#f5a543"/>
<path d="M5.8 13.5 L9.8 15 L9.8 22.8 L5.8 21 Z" fill="none" stroke="#fff" stroke-width="1.5" stroke-linecap="round" stroke-linejoin="round"/>
<path d="M19.5 15.5 L21.4 14.5 L21.4 23" fill="none" stroke="#fff" stroke-width="2.1" stroke-linecap="butt" stroke-linejoin="round"/>
</g>
<g transform="translate(1767,285) scale(0.71875)">
<rect x="1.2" y="1.2" width="29.6" height="29.6" fill="#f5a94e" stroke="#f39712" stroke-width="2.4"/>
<path d="M21.8 10.5 L21.8 7.2 L7 7.2 L7 25.2 L21.8 25.2 L21.8 21.5" fill="none" stroke="#fff" stroke-width="2.2" stroke-linecap="butt" stroke-linejoin="miter"/>
<line x1="12" y1="16" x2="24" y2="16" stroke="#fff" stroke-width="2.2" stroke-linecap="butt"/>
<path d="M22 12.2 L27.5 16 L22 19.8 Z" fill="#fff"/>
</g>
<defs><filter id="sh" x="-30%" y="-30%" width="160%" height="160%"><feGaussianBlur stdDeviation="9"/></filter></defs>
<path d="M1480 338 L1964 338 C2010 338 2035 363 2035 409 L2035 1622 C2035 1668 2010 1693 1964 1693 L1480 1693 C1434 1693 1409 1668 1409 1622 L1409 409 C1409 363 1434 338 1480 338 Z" fill="#ffffff" stroke="#000000" stroke-width="2.2" stroke-linecap="round" stroke-linejoin="round"/>
<path d="M1536 338 Q1547 338 1547.5 349 C1548 374 1560 389 1590 389 L1854 389 C1884 389 1896 374 1896.5 349 Q1897 338 1908 338 Z" fill="#000000"/>
<rect x="1609" y="1674" width="224" height="8" fill="#000000" rx="4"/>
<rect x="1440.5" y="990.5" width="563.0" height="50.5" fill="#ffffff" stroke="#d9d9d9" stroke-width="1.2" rx="5"/>
<rect x="1434" y="1010.5" width="12" height="12.0" fill="#ffffff" stroke="#444444" stroke-width="1.8"/>
<rect x="1998" y="1010.5" width="12" height="12.0" fill="#ffffff" stroke="#444444" stroke-width="1.8"/>
<defs><linearGradient id="ag" x1="0" y1="0" x2="1" y2="0"><stop offset="0" stop-color="#8a8a8a" stop-opacity="0"/><stop offset="0.55" stop-color="#8a8a8a"/><stop offset="1" stop-color="#8a8a8a"/></linearGradient></defs>
<rect x="1256" y="1014.5" width="146" height="3.0" fill="url(#ag)"/>
<path d="M1376.5 992.5 L1402 1016 L1376.5 1040" fill="none" stroke="#8a8a8a" stroke-width="3.2" stroke-linecap="butt" stroke-linejoin="miter"/>
<rect x="2125" y="311" width="225" height="404" fill="#000000" rx="14" opacity="0.22" filter="url(#sh)"/>
<rect x="2125.5" y="306.5" width="224.0" height="404.5" fill="#e0e0e0" stroke="#a8a8a8" stroke-width="1" rx="13"/>
<path d="M2125.5 319 L2125.5 320 C2125.5 312 2131 306.5 2139 306.5 L2336 306.5 C2344 306.5 2349.5 312 2349.5 320 L2349.5 319 Z" fill="#d6d6d6"/>
<path d="M2126 319.5 L2126 320.5 Q2126 307 2139 307 L2336 307 Q2349 307 2349 320.5 L2349 319.5" fill="#d6d6d6"/>
<rect x="2125.5" y="319" width="224.0" height="1" fill="#a5a5a5"/>
<path d="M2126 690 L2349 690 L2349 698 Q2349 711 2336 711 L2139 711 Q2126 711 2126 698 Z" fill="#d4d4d4"/>
<rect x="2125.5" y="690" width="224.0" height="1.5" fill="#9a9a9a"/>
<rect x="2156.5" y="338" width="155.0" height="336" fill="#ffffff" stroke="#9d9d9d" stroke-width="0.8" rx="19"/>
<path d="M2189.5 338 L2279.5 338 L2279.5 342 Q2279.5 350 2271.5 350 L2197.5 350 Q2189.5 350 2189.5 342 Z" fill="#000000"/>
<rect x="2290" y="338" width="25" height="0.8000000000000114" fill="#a0a0a0"/>
<rect x="1217.3" y="1777.3" width="23.200000000000045" height="23.200000000000045" fill="none" stroke="#7b7b7b" stroke-width="2" rx="4"/>
<rect x="1220.2" y="1780.2" width="5.599999999999909" height="17.59999999999991" fill="#7b7b7b" rx="2"/>
<circle cx="1276" cy="1789" r="12.6" fill="none" stroke="#7b7b7b" stroke-width="2"/>
<circle cx="1276" cy="1781.8" r="1.7" fill="#7b7b7b"/>
<path d="M1269 1785 L1283 1785" fill="none" stroke="#7b7b7b" stroke-width="1.8" stroke-linecap="round" stroke-linejoin="round"/>
<path d="M1276 1785.5 L1276 1791 L1273 1798 M1276 1791 L1279 1798" fill="none" stroke="#7b7b7b" stroke-width="1.8" stroke-linecap="round" stroke-linejoin="round"/>
<circle cx="1328" cy="1789" r="12.6" fill="none" stroke="#7b7b7b" stroke-width="2"/>
<path d="M1328 1776.4 A12.6 12.6 0 0 0 1328 1801.6 Z" fill="#7b7b7b"/>
<path d="M1328 1784 A5 5 0 0 0 1328 1794 Z" fill="#fafafa"/>
<path d="M1328 1784 A5 5 0 0 1 1328 1794 Z" fill="#7b7b7b"/>
<rect x="1368.4" y="1782.8" width="17.59999999999991" height="17.700000000000045" fill="none" stroke="#7b7b7b" stroke-width="2" rx="3"/>
<path d="M1393.5 1783.5 Q1393.5 1776.5 1386 1775.5" fill="none" stroke="#7b7b7b" stroke-width="1.9" stroke-linecap="butt" stroke-linejoin="round"/>
<path d="M1387 1771.5 L1382 1775.5 L1387 1779.5 Z" fill="#7b7b7b" stroke="#7b7b7b" stroke-width="1" stroke-linecap="round" stroke-linejoin="round"/>
<rect x="1422.4" y="1778.6" width="22.09999999999991" height="21.90000000000009" fill="none" stroke="#c6c6c6" stroke-width="2" rx="3"/>
<line x1="1433.5" y1="1779" x2="1433.5" y2="1800" stroke="#c6c6c6" stroke-width="2" stroke-linecap="butt"/>
<rect x="1479.4" y="1776.4" width="14.599999999999909" height="26.199999999999818" fill="none" stroke="#7b7b7b" stroke-width="2" rx="3"/>
<line x1="1483.5" y1="1777.6" x2="1490" y2="1777.6" stroke="#7b7b7b" stroke-width="1.6" stroke-linecap="butt"/>
<line x1="1483.5" y1="1800" x2="1490" y2="1800" stroke="#7b7b7b" stroke-width="1.6" stroke-linecap="butt"/>
<text x="1525" y="1798" font-size="22" fill="#6e6e6e" textLength="97" lengthAdjust="spacingAndGlyphs">iPhone 11</text>
<circle cx="1722.9" cy="1784.8" r="9.6" fill="none" stroke="#7b7b7b" stroke-width="2"/>
<line x1="1729.6" y1="1791.5" x2="1738.4" y2="1800.4" stroke="#7b7b7b" stroke-width="2.6" stroke-linecap="round"/>
<line x1="1718.4" y1="1784.8" x2="1727.5" y2="1784.8" stroke="#7b7b7b" stroke-width="2" stroke-linecap="butt"/>
<text x="1772" y="1797" font-size="22" fill="#6e6e6e" textLength="44" lengthAdjust="spacingAndGlyphs">76%</text>
<circle cx="1857" cy="1784.8" r="9.6" fill="none" stroke="#7b7b7b" stroke-width="2"/>
<line x1="1863.7" y1="1791.5" x2="1872.5" y2="1800.4" stroke="#7b7b7b" stroke-width="2.6" stroke-linecap="round"/>
<line x1="1852.5" y1="1784.8" x2="1861.5" y2="1784.8" stroke="#7b7b7b" stroke-width="2" stroke-linecap="butt"/>
<line x1="1857" y1="1780.3" x2="1857" y2="1789.3" stroke="#7b7b7b" stroke-width="2" stroke-linecap="butt"/>
<path d="M2127 1779.3 L2127 1775.3 L2131 1775.3" fill="none" stroke="#c9c9c9" stroke-width="1.8" stroke-linecap="butt" stroke-linejoin="miter"/>
<path d="M2155 1779.3 L2155 1775.3 L2151 1775.3" fill="none" stroke="#c9c9c9" stroke-width="1.8" stroke-linecap="butt" stroke-linejoin="miter"/>
<path d="M2127 1799 L2127 1803 L2131 1803" fill="none" stroke="#c9c9c9" stroke-width="1.8" stroke-linecap="butt" stroke-linejoin="miter"/>
<path d="M2155 1799 L2155 1803 L2151 1803" fill="none" stroke="#c9c9c9" stroke-width="1.8" stroke-linecap="butt" stroke-linejoin="miter"/>
<path d="M2135 1791.5 A8 8 0 1 1 2142 1795" fill="none" stroke="#c9c9c9" stroke-width="1.9" stroke-linecap="butt" stroke-linejoin="round"/>
<path d="M2144 1791 L2139.5 1795 L2144 1799" fill="none" stroke="#c9c9c9" stroke-width="1.9" stroke-linecap="butt" stroke-linejoin="miter"/>
<line x1="2178.7" y1="1774" x2="2178.7" y2="1804" stroke="#7b7b7b" stroke-width="2" stroke-linecap="butt"/>
<rect x="2183.4" y="1779.4" width="18.0" height="7.7999999999999545" fill="none" stroke="#7b7b7b" stroke-width="2"/>
<rect x="2183.4" y="1791.5" width="23.799999999999727" height="7.599999999999909" fill="none" stroke="#7b7b7b" stroke-width="2"/>
<rect x="2239.8" y="1783.2" width="10.799999999999727" height="11.399999999999864" fill="none" stroke="#7b7b7b" stroke-width="2"/>
<line x1="2240.6" y1="1775" x2="2249.2" y2="1775" stroke="#7b7b7b" stroke-width="2" stroke-linecap="butt"/>
<line x1="2244.9" y1="1775" x2="2244.9" y2="1782.4" stroke="#7b7b7b" stroke-width="2" stroke-linecap="butt"/>
<line x1="2240.6" y1="1802.6" x2="2249.2" y2="1802.6" stroke="#7b7b7b" stroke-width="2" stroke-linecap="butt"/>
<line x1="2244.9" y1="1795.5" x2="2244.9" y2="1802.6" stroke="#7b7b7b" stroke-width="2" stroke-linecap="butt"/>
<line x1="2231" y1="1784.7" x2="2231" y2="1793.4" stroke="#7b7b7b" stroke-width="2" stroke-linecap="butt"/>
<line x1="2231" y1="1789" x2="2239" y2="1789" stroke="#7b7b7b" stroke-width="2" stroke-linecap="butt"/>
<line x1="2258.8" y1="1784.7" x2="2258.8" y2="1793.4" stroke="#7b7b7b" stroke-width="2" stroke-linecap="butt"/>
<line x1="2251.3" y1="1789" x2="2258.8" y2="1789" stroke="#7b7b7b" stroke-width="2" stroke-linecap="butt"/>
<path d="M2297.2 1780.5 L2305.8 1797 L2288.6 1797 Z" fill="none" stroke="#7b7b7b" stroke-width="2" stroke-linecap="round" stroke-linejoin="round"/>
<circle cx="2297.2" cy="1791" r="2.7" fill="#7b7b7b"/>
<line x1="2283" y1="1784.7" x2="2283" y2="1793.4" stroke="#7b7b7b" stroke-width="2" stroke-linecap="butt"/>
<line x1="2283" y1="1789" x2="2288" y2="1789" stroke="#7b7b7b" stroke-width="2" stroke-linecap="butt"/>
<line x1="2311" y1="1784.7" x2="2311" y2="1793.4" stroke="#7b7b7b" stroke-width="2" stroke-linecap="butt"/>
<line x1="2306" y1="1789" x2="2311" y2="1789" stroke="#7b7b7b" stroke-width="2" stroke-linecap="butt"/>
<path d="M2349.5 1779.4 L2339.5 1779.4 L2339.5 1802.2 L2366.5 1802.2 L2366.5 1779.4 L2356.5 1779.4" fill="none" stroke="#7b7b7b" stroke-width="2" stroke-linecap="butt" stroke-linejoin="miter"/>
<line x1="2353" y1="1776" x2="2353" y2="1793.5" stroke="#7b7b7b" stroke-width="2" stroke-linecap="butt"/>
<path d="M2346.2 1786.6 L2353 1793.4 L2359.8 1786.6" fill="none" stroke="#7b7b7b" stroke-width="2" stroke-linecap="butt" stroke-linejoin="miter"/>
<path d="M681 1841.5 Q681 1839 683.5 1839 L703 1839 Q704.5 1839 705.5 1840.2 L710.2 1848 L705.5 1855.8 Q704.5 1857 703 1857 L683.5 1857 Q681 1857 681 1854.5 Z" fill="#0a6cff"/>
<rect x="726" y="1836" width="2" height="24" fill="#dadada"/>
<rect x="750.4" y="1836" width="3.1000000000000227" height="23.59999999999991" fill="none" stroke="#6e6e6e" stroke-width="2" rx="1.8"/>
<rect x="762.3" y="1836" width="3.400000000000091" height="23.59999999999991" fill="none" stroke="#6e6e6e" stroke-width="2" rx="1.8"/>
<path d="M805 1852.5 L818 1839.5 L830.5 1852" fill="none" stroke="#b9b9b9" stroke-width="2" stroke-linecap="butt" stroke-linejoin="miter"/>
<path d="M823.5 1852 L830.5 1852 L830.5 1845" fill="none" stroke="#b9b9b9" stroke-width="2" stroke-linecap="butt" stroke-linejoin="miter"/>
<rect x="810.6" y="1855.4" width="14.899999999999977" height="4.599999999999909" fill="none" stroke="#b9b9b9" stroke-width="1.9"/>
<line x1="878" y1="1835.5" x2="878" y2="1852" stroke="#b9b9b9" stroke-width="2" stroke-linecap="butt"/>
<path d="M871.6 1845.6 L878 1852 L884.4 1845.6" fill="none" stroke="#b9b9b9" stroke-width="2" stroke-linecap="butt" stroke-linejoin="miter"/>
<rect x="870.4" y="1855.4" width="15.200000000000045" height="4.599999999999909" fill="none" stroke="#b9b9b9" stroke-width="1.9"/>
<line x1="938" y1="1835.5" x2="938" y2="1852" stroke="#b9b9b9" stroke-width="2" stroke-linecap="butt"/>
<path d="M931.6 1841.9 L938 1835.5 L944.4 1841.9" fill="none" stroke="#b9b9b9" stroke-width="2" stroke-linecap="butt" stroke-linejoin="miter"/>
<rect x="930.3" y="1855.4" width="15.300000000000068" height="4.599999999999909" fill="none" stroke="#b9b9b9" stroke-width="1.9"/>
<rect x="968" y="1836" width="2" height="24" fill="#dadada"/>
<path d="M998.5 1845 L1010 1840 L1010 1855 L998.5 1860.5 Z" fill="none" stroke="#6e6e6e" stroke-width="2" stroke-linecap="round" stroke-linejoin="round"/>
<path d="M994 1857 L994 1842.5 L1005 1837.5" fill="none" stroke="#6e6e6e" stroke-width="2" stroke-linecap="butt" stroke-linejoin="round"/>
<path d="M989.6 1855 L989.6 1840.5 L1001 1835.5" fill="none" stroke="#6e6e6e" stroke-width="2" stroke-linecap="butt" stroke-linejoin="round"/>
<circle cx="1051.5" cy="1839.4" r="4.3" fill="none" stroke="#6e6e6e" stroke-width="2"/>
<circle cx="1068.2" cy="1847.8" r="4.3" fill="none" stroke="#6e6e6e" stroke-width="2"/>
<circle cx="1051.5" cy="1856.3" r="4.3" fill="none" stroke="#6e6e6e" stroke-width="2"/>
<line x1="1055.4" y1="1841.4" x2="1064.3" y2="1845.8" stroke="#6e6e6e" stroke-width="2" stroke-linecap="butt"/>
<line x1="1055.4" y1="1854.3" x2="1064.3" y2="1849.8" stroke="#6e6e6e" stroke-width="2" stroke-linecap="butt"/>
<rect x="1110.8" y="1836.6" width="18.5" height="8.200000000000045" fill="none" stroke="#6e6e6e" stroke-width="2" rx="4.1"/>
<circle cx="1115.3" cy="1840.7" r="2.6" fill="#6e6e6e"/>
<rect x="1110.8" y="1850.7" width="18.5" height="8.599999999999909" fill="none" stroke="#6e6e6e" stroke-width="2" rx="4.3"/>
<circle cx="1125.2" cy="1855" r="2.6" fill="#6e6e6e"/>
<path d="M1168.5 1845.6 L1192.4 1835.6 L1182.2 1859.8 L1180.3 1847.3 Z" fill="none" stroke="#6e6e6e" stroke-width="2" stroke-linecap="round" stroke-linejoin="round"/>
<rect x="1210" y="1836" width="2" height="24" fill="#dadada"/>
<rect x="1227.3" y="1831.8" width="28.90000000000009" height="29.90000000000009" fill="none" stroke="#bdbdbd" stroke-width="1.6" rx="6"/>
<circle cx="1241.75" cy="1846.75" r="10.98" fill="none" stroke="#bdbdbd" stroke-width="3.2"/>
<circle cx="1241.75" cy="1846.75" r="5.1850000000000005" fill="none" stroke="#bdbdbd" stroke-width="1.2"/>
<line x1="1229.5" y1="1834" x2="1254" y2="1859.5" stroke="#bdbdbd" stroke-width="1.2" stroke-linecap="round"/>
<line x1="1254" y1="1834" x2="1229.5" y2="1859.5" stroke="#bdbdbd" stroke-width="1.2" stroke-linecap="round"/>
<line x1="1241.75" y1="1832" x2="1241.75" y2="1861.5" stroke="#bdbdbd" stroke-width="1" stroke-linecap="round"/>
<line x1="1227.5" y1="1846.75" x2="1256" y2="1846.75" stroke="#bdbdbd" stroke-width="1" stroke-linecap="round"/>
<line x1="1234.125" y1="1832" x2="1234.125" y2="1861.5" stroke="#bdbdbd" stroke-width="0.9" stroke-linecap="round"/>
<line x1="1249.375" y1="1832" x2="1249.375" y2="1861.5" stroke="#bdbdbd" stroke-width="0.9" stroke-linecap="round"/>
<line x1="1227.5" y1="1838.625" x2="1256" y2="1838.625" stroke="#bdbdbd" stroke-width="0.9" stroke-linecap="round"/>
<line x1="1227.5" y1="1853.875" x2="1256" y2="1853.875" stroke="#bdbdbd" stroke-width="0.9" stroke-linecap="round"/>
<text x="1267" y="1855" font-size="22" fill="#2b2727" textLength="123" lengthAdjust="spacingAndGlyphs">GuardDemo</text>
<rect x="2340" y="1837" width="23" height="22" fill="none" stroke="#6e6e6e" stroke-width="2" rx="4"/>
<rect x="2343.5" y="1850" width="16.0" height="5.5" fill="#6e6e6e" rx="1.5"/>
<rect x="669.5" y="1771.5" width="513.0" height="41.5" fill="#efefef" stroke="#d4d4d4" stroke-width="1" rx="14"/>
<circle cx="690.5" cy="1792" r="11.3" fill="none" stroke="#2a2a2a" stroke-width="2"/>
<line x1="684" y1="1787.5" x2="697" y2="1787.5" stroke="#2a2a2a" stroke-width="2" stroke-linecap="butt"/>
<line x1="686.5" y1="1792" x2="694.5" y2="1792" stroke="#2a2a2a" stroke-width="2" stroke-linecap="butt"/>
<line x1="689" y1="1796.5" x2="692" y2="1796.5" stroke="#2a2a2a" stroke-width="2" stroke-linecap="butt"/>
<text x="713" y="1803" font-size="22" fill="#b5b5b5" textLength="52" lengthAdjust="spacingAndGlyphs">Filter</text>
<line x1="146.5" y1="1838" x2="146.5" y2="1859" stroke="#3a3636" stroke-width="2.2" stroke-linecap="butt"/>
<line x1="136" y1="1848.5" x2="157" y2="1848.5" stroke="#3a3636" stroke-width="2.2" stroke-linecap="butt"/>
<rect x="169.5" y="1827.5" width="476.0" height="42.0" fill="#dcd7d7" stroke="#c9c4c4" stroke-width="1" rx="12"/>
<rect x="178" y="1836.5" width="50" height="23.5" fill="none" stroke="#5a5656" stroke-width="2" rx="11.75"/>
<line x1="186" y1="1842.5" x2="199" y2="1842.5" stroke="#5a5656" stroke-width="2" stroke-linecap="butt"/>
<line x1="188.5" y1="1847.5" x2="196.5" y2="1847.5" stroke="#5a5656" stroke-width="2" stroke-linecap="butt"/>
<line x1="191" y1="1852.5" x2="194" y2="1852.5" stroke="#5a5656" stroke-width="2" stroke-linecap="butt"/>
<path d="M209.5 1845.5 L214 1850 L218.5 1845.5" fill="none" stroke="#5a5656" stroke-width="2" stroke-linecap="round" stroke-linejoin="round"/>
<text x="237" y="1855" font-size="26" fill="#a29d9d" textLength="51" lengthAdjust="spacingAndGlyphs">Filter</text>
<circle cx="586.5" cy="1848.5" r="12" fill="none" stroke="#5a5656" stroke-width="2"/>
<path d="M586.5 1841 L586.5 1849 L580.5 1849" fill="none" stroke="#5a5656" stroke-width="2" stroke-linecap="butt" stroke-linejoin="miter"/>
<rect x="609" y="1836.5" width="24" height="24.0" fill="none" stroke="#5a5656" stroke-width="2" rx="1"/>
<line x1="612.5" y1="1848.5" x2="620.5" y2="1848.5" stroke="#5a5656" stroke-width="1.8" stroke-linecap="butt"/>
<line x1="616.5" y1="1844.5" x2="616.5" y2="1852.5" stroke="#5a5656" stroke-width="1.8" stroke-linecap="butt"/>
<line x1="623.5" y1="1848.5" x2="629.5" y2="1848.5" stroke="#5a5656" stroke-width="1.8" stroke-linecap="butt"/>
<g transform="translate(221,501)">
<g transform="rotate(-9 14 12)">
<rect x="1.2" y="3.2" width="23.8" height="17.6" fill="none" stroke="#0aaff0" stroke-width="2.3" rx="3"/>
</g>
<rect x="7.8" y="7.2" width="26.2" height="21.8" fill="#e8e3e3" rx="3"/>
<rect x="8.8" y="8.2" width="24.2" height="19.8" fill="none" stroke="#0aaff0" stroke-width="2.2" rx="3"/>
<circle cx="16.8" cy="15" r="2.6" fill="#0aaff0"/>
<path d="M9.8 26.5 L9.8 23 L14.5 19.8 L19.5 22.5 L25 17.3 L32 22.3 L32 26.8 Z" fill="#0aaff0"/>
</g>
<rect x="223.5" y="593" width="28.0" height="22" fill="none" stroke="#5f7c8c" stroke-width="2.2" rx="3.5"/>
<line x1="223.5" y1="600.7" x2="251.5" y2="600.7" stroke="#5f7c8c" stroke-width="2" stroke-linecap="butt"/>
<line x1="223.5" y1="607.2" x2="251.5" y2="607.2" stroke="#5f7c8c" stroke-width="2" stroke-linecap="butt"/>
<line x1="237.5" y1="594" x2="237.5" y2="614" stroke="#5f7c8c" stroke-width="2" stroke-linecap="butt"/>
<g transform="translate(169,699)">
<path d="M13 0.5 L26 6 L26 21.3 L13 27 L0 21.3 L0 6 Z" fill="#c68a48"/>
<path d="M13 0.5 L26 6 L13 11.5 L0 6 Z" fill="#d9a466"/>
<path d="M13 11.5 L26 6 L26 21.3 L13 27 Z" fill="#b97c3a"/>
<path d="M6.5 3.3 L19.5 8.8 L19.5 13.5 L17.2 14.5 L17.2 9.8 L4.2 4.3 Z" fill="#f2dcc0" opacity="0.55"/>
</g>
<path d="M2464.2 170 Q2464.2 168.9 2465.3 168.9 L2472.4 168.9 L2481.9 178 L2481.9 191.1 Q2481.9 192.2 2480.8 192.2 L2465.3 192.2 Q2464.2 192.2 2464.2 191.1 Z" fill="none" stroke="#787878" stroke-width="2" stroke-linecap="round" stroke-linejoin="round"/>
<path d="M2472 169.5 L2472 177.5 L2481.5 177.5" fill="none" stroke="#787878" stroke-width="2" stroke-linecap="round" stroke-linejoin="miter"/>
<circle cx="2531.9" cy="180.6" r="12.2" fill="none" stroke="#787878" stroke-width="2"/>
<path d="M2531.9 172.2 L2531.9 180.6 L2525.4 180.6" fill="none" stroke="#787878" stroke-width="2" stroke-linecap="butt" stroke-linejoin="miter"/>
<circle cx="2592" cy="180.6" r="12.2" fill="none" stroke="#787878" stroke-width="2"/>
<text x="2592" y="188" font-size="20" fill="#787878" text-anchor="middle">?</text>
<rect x="2639" y="170" width="26" height="22" fill="#0a6cff" rx="3"/>
<rect x="2643.4" y="174" width="9.199999999999818" height="10.5" fill="#ffffff"/>
<line x1="2655" y1="174.9" x2="2661" y2="174.9" stroke="#fff" stroke-width="2" stroke-linecap="butt"/>
<line x1="2655" y1="178.9" x2="2661" y2="178.9" stroke="#fff" stroke-width="2" stroke-linecap="butt"/>
<line x1="2655" y1="182.7" x2="2661" y2="182.7" stroke="#fff" stroke-width="2" stroke-linecap="butt"/>
<line x1="2643.4" y1="187.2" x2="2661" y2="187.2" stroke="#fff" stroke-width="2" stroke-linecap="butt"/>
<line x1="2699.3" y1="170.8" x2="2724.7" y2="170.8" stroke="#787878" stroke-width="2" stroke-linecap="butt"/>
<circle cx="2717.7" cy="170.8" r="2.6" fill="#f4eeee" stroke="#787878" stroke-width="1.8"/>
<line x1="2699.3" y1="181" x2="2724.7" y2="181" stroke="#787878" stroke-width="2" stroke-linecap="butt"/>
<circle cx="2703.7" cy="181" r="2.6" fill="#f4eeee" stroke="#787878" stroke-width="1.8"/>
<line x1="2699.3" y1="191" x2="2724.7" y2="191" stroke="#787878" stroke-width="2" stroke-linecap="butt"/>
<circle cx="2717.7" cy="191" r="2.6" fill="#f4eeee" stroke="#787878" stroke-width="1.8"/>
<path d="M2760.5 170.5 L2782 192.2 L2760.5 192.2 Z" fill="none" stroke="#787878" stroke-width="2" stroke-linecap="round" stroke-linejoin="miter"/>
<path d="M2764.5 180.5 L2772.5 188.2 L2764.5 188.2 Z" fill="none" stroke="#787878" stroke-width="1.8" stroke-linecap="round" stroke-linejoin="miter"/>
<path d="M2841 173.5 A12 12 0 1 0 2841 187.7" fill="none" stroke="#787878" stroke-width="2" stroke-linecap="butt" stroke-linejoin="round"/>
<circle cx="2832.3" cy="180.6" r="4.8" fill="#787878"/>
<line x1="2832.3" y1="180.6" x2="2845" y2="180.6" stroke="#787878" stroke-width="2" stroke-linecap="butt"/>
<text x="2407" y="242" font-size="23" fill="#7c7878" font-weight="700" textLength="164" lengthAdjust="spacingAndGlyphs">Custom Class</text>
<text x="2551" y="295" font-size="22" fill="#2b2727" text-anchor="end" textLength="50" lengthAdjust="spacingAndGlyphs">Class</text>
<rect x="2562.5" y="269.5" width="335.5" height="32.80000000000001" fill="#bdb8b8" rx="6"/>
<rect x="2562.5" y="269" width="335.5" height="32.5" fill="#ffffff" stroke="#e2dede" stroke-width="0.8" rx="6"/>
<text x="2569" y="294" font-size="22" fill="#1f1b1b" textLength="178" lengthAdjust="spacingAndGlyphs">AccountTextField</text>
<circle cx="2848" cy="285" r="9.8" fill="#808080"/>
<line x1="2842.5" y1="285" x2="2852" y2="285" stroke="#fff" stroke-width="2.2" stroke-linecap="butt"/>
<path d="M2848.3 280.4 L2852.8 285 L2848.3 289.6" fill="none" stroke="#fff" stroke-width="2.2" stroke-linecap="round" stroke-linejoin="miter"/>
<rect x="2870" y="273" width="24" height="24" fill="url(#bb)" rx="5.5"/>
<path d="M2877.1 282.6 L2882.0 287.3 L2886.9 282.6" fill="none" stroke="#fff" stroke-width="2.4" stroke-linecap="round" stroke-linejoin="round"/>
<text x="2551" y="339" font-size="22" fill="#2b2727" text-anchor="end" textLength="70" lengthAdjust="spacingAndGlyphs">Module</text>
<rect x="2562.5" y="313.0" width="335.5" height="32.80000000000001" fill="#bdb8b8" rx="6"/>
<rect x="2562.5" y="312.5" width="335.5" height="32.5" fill="#ffffff" stroke="#e2dede" stroke-width="0.8" rx="6"/>
<text x="2569" y="337" font-size="22" fill="#1f1b1b" textLength="61" lengthAdjust="spacingAndGlyphs">Guard</text>
<rect x="2870" y="317" width="24" height="24" fill="url(#bb)" rx="5.5"/>
<path d="M2877.1 326.6 L2882.0 331.3 L2886.9 326.6" fill="none" stroke="#fff" stroke-width="2.4" stroke-linecap="round" stroke-linejoin="round"/>
<rect x="2474" y="263" width="429" height="88" fill="none" stroke="#fa2a0f" stroke-width="4"/>
<rect x="2561.5" y="360.5" width="23.0" height="22.5" fill="#ffffff" stroke="#cbc6c6" stroke-width="1" rx="4.5"/>
<text x="2592" y="379" font-size="22" fill="#2b2727" textLength="282" lengthAdjust="spacingAndGlyphs">Inherit Module From Target</text>
<rect x="2408" y="414" width="488" height="2" fill="#dcd8d8"/>
<text x="2407" y="450" font-size="23" fill="#7c7878" font-weight="700" textLength="92" lengthAdjust="spacingAndGlyphs">Identity</text>
<text x="2550" y="504" font-size="22" fill="#2b2727" text-anchor="end" textLength="134" lengthAdjust="spacingAndGlyphs">Restoration ID</text>
<rect x="2562" y="480.5" width="335" height="32.299999999999955" fill="#bdb8b8"/>
<rect x="2562" y="480" width="335" height="32" fill="#ffffff" stroke="#e2dede" stroke-width="0.8"/>
<rect x="2408" y="538" width="488" height="2" fill="#dcd8d8"/>
<text x="2407" y="574" font-size="23" fill="#7c7878" font-weight="700" textLength="391" lengthAdjust="spacingAndGlyphs">User Defined Runtime Attributes</text>
<rect x="2409" y="594" width="486" height="190" fill="#ffffff" stroke="#c6c2c2" stroke-width="2"/>
<text x="2427" y="630" font-size="22" fill="#2b2727" textLength="89" lengthAdjust="spacingAndGlyphs">Key Path</text>
<rect x="2673" y="606" width="2" height="31" fill="#e2e2e2"/>
<rect x="2809" y="606" width="2" height="31" fill="#e2e2e2"/>
<text x="2682" y="630" font-size="22" fill="#2b2727" textLength="49" lengthAdjust="spacingAndGlyphs">Type</text>
<text x="2817" y="630" font-size="22" fill="#2b2727" textLength="48" lengthAdjust="spacingAndGlyphs">Val...</text>
<rect x="2410" y="647" width="484" height="2" fill="#e4e4e4"/>
<line x1="2430.5" y1="757" x2="2430.5" y2="778" stroke="#3a3636" stroke-width="2" stroke-linecap="butt"/>
<line x1="2420" y1="767.5" x2="2441" y2="767.5" stroke="#3a3636" stroke-width="2" stroke-linecap="butt"/>
<line x1="2460" y1="767.5" x2="2481" y2="767.5" stroke="#c4c0c0" stroke-width="2" stroke-linecap="butt"/>
<rect x="2408" y="802" width="488" height="2" fill="#dcd8d8"/>
<text x="2407" y="838" font-size="23" fill="#7c7878" font-weight="700" textLength="121" lengthAdjust="spacingAndGlyphs">Document</text>
<text x="2551" y="892" font-size="22" fill="#2b2727" text-anchor="end" textLength="51" lengthAdjust="spacingAndGlyphs">Label</text>
<rect x="2562" y="868.5" width="334" height="32.299999999999955" fill="#bdb8b8"/>
<rect x="2562" y="868" width="334" height="32" fill="#ffffff" stroke="#e2dede" stroke-width="0.8"/>
<text x="2569" y="892" font-size="22" fill="#b9b5b5" textLength="218" lengthAdjust="spacingAndGlyphs">Xcode Specific Label</text>
<line x1="2568.5" y1="920.5" x2="2579.5" y2="931.5" stroke="#3c3838" stroke-width="2.2" stroke-linecap="butt"/>
<line x1="2579.5" y1="920.5" x2="2568.5" y2="931.5" stroke="#3c3838" stroke-width="2.2" stroke-linecap="butt"/>
<rect x="2598" y="918" width="16.5" height="16.5" fill="#f2a49c" rx="1.5"/>
<rect x="2598" y="933.5" width="16.5" height="1.5" fill="#000" opacity="0.10"/>
<rect x="2634" y="918" width="16.5" height="16.5" fill="#f6c68d" rx="1.5"/>
<rect x="2634" y="933.5" width="16.5" height="1.5" fill="#000" opacity="0.10"/>
<rect x="2670" y="918" width="16.5" height="16.5" fill="#f4e48b" rx="1.5"/>
<rect x="2670" y="933.5" width="16.5" height="1.5" fill="#000" opacity="0.10"/>
<rect x="2706" y="918" width="16.5" height="16.5" fill="#c9e38c" rx="1.5"/>
<rect x="2706" y="933.5" width="16.5" height="1.5" fill="#000" opacity="0.10"/>
<rect x="2742" y="918" width="16.5" height="16.5" fill="#9ec9f7" rx="1.5"/>
<rect x="2742" y="933.5" width="16.5" height="1.5" fill="#000" opacity="0.10"/>
<rect x="2778" y="918" width="16.5" height="16.5" fill="#d5b8ee" rx="1.5"/>
<rect x="2778" y="933.5" width="16.5" height="1.5" fill="#000" opacity="0.10"/>
<rect x="2814" y="918" width="16.5" height="16.5" fill="#d3d3d3" rx="1.5"/>
<rect x="2814" y="933.5" width="16.5" height="1.5" fill="#000" opacity="0.10"/>
<text x="2551" y="976" font-size="22" fill="#2b2727" text-anchor="end" textLength="89" lengthAdjust="spacingAndGlyphs">Object ID</text>
<text x="2565" y="976" font-size="22" fill="#1f1b1b" textLength="142" lengthAdjust="spacingAndGlyphs">mEm-Q1-Ugq</text>
<text x="2551" y="1016" font-size="22" fill="#2b2727" text-anchor="end" textLength="44" lengthAdjust="spacingAndGlyphs">Lock</text>
<rect x="2562.5" y="992.5" width="335.5" height="32.799999999999955" fill="#bdb8b8" rx="6"/>
<rect x="2562.5" y="992" width="335.5" height="32.5" fill="#ffffff" stroke="#e2dede" stroke-width="0.8" rx="6"/>
<text x="2575" y="1016" font-size="22" fill="#1f1b1b" textLength="213" lengthAdjust="spacingAndGlyphs">Inherited - (Nothing)</text>
<rect x="2870" y="996" width="24" height="24" fill="url(#bb)" rx="5.5"/>
<path d="M2877.6 1004.6 L2882.0 1000.6 L2886.4 1004.6" fill="none" stroke="#fff" stroke-width="2.2" stroke-linecap="round" stroke-linejoin="round"/>
<path d="M2877.6 1011.4 L2882.0 1015.4 L2886.4 1011.4" fill="none" stroke="#fff" stroke-width="2.2" stroke-linecap="round" stroke-linejoin="round"/>
<text x="2551" y="1062" font-size="22" fill="#2b2727" text-anchor="end" textLength="131" lengthAdjust="spacingAndGlyphs">Localizer Hint</text>
<rect x="2562" y="1038.5" width="334" height="32.299999999999955" fill="#bdb8b8"/>
<rect x="2562" y="1038" width="334" height="32" fill="#ffffff" stroke="#e2dede" stroke-width="0.8"/>
<text x="2569" y="1062" font-size="22" fill="#b9b5b5" textLength="241" lengthAdjust="spacingAndGlyphs">Comment For Localizer</text>
<rect x="2408" y="1096" width="488" height="2" fill="#dcd8d8"/>
<text x="2407" y="1132" font-size="23" fill="#7c7878" font-weight="700" textLength="152" lengthAdjust="spacingAndGlyphs">Accessibility</text>
<text x="2551" y="1180" font-size="22" fill="#2b2727" text-anchor="end" textLength="119" lengthAdjust="spacingAndGlyphs">Accessibility</text>
<rect x="2562" y="1161" width="24" height="23.5" fill="#0a6eff" rx="4.5"/>
<path d="M2567.6 1173 L2572 1178.2 L2580.6 1166.6" fill="none" stroke="#fff" stroke-width="2.9" stroke-linecap="round" stroke-linejoin="round"/>
<text x="2595" y="1180" font-size="22" fill="#2b2727" textLength="82" lengthAdjust="spacingAndGlyphs">Enabled</text>
<text x="2551" y="1222" font-size="22" fill="#2b2727" text-anchor="end" textLength="51" lengthAdjust="spacingAndGlyphs">Label</text>
<rect x="2562" y="1198.5" width="334" height="32.299999999999955" fill="#bdb8b8"/>
<rect x="2562" y="1198" width="334" height="32" fill="#ffffff" stroke="#e2dede" stroke-width="0.8"/>
<text x="2569" y="1222" font-size="22" fill="#b9b5b5" textLength="55" lengthAdjust="spacingAndGlyphs">Label</text>
<text x="2551" y="1268" font-size="22" fill="#2b2727" text-anchor="end" textLength="38" lengthAdjust="spacingAndGlyphs">Hint</text>
<rect x="2562" y="1244.5" width="334" height="32.299999999999955" fill="#bdb8b8"/>
<rect x="2562" y="1244" width="334" height="32" fill="#ffffff" stroke="#e2dede" stroke-width="0.8"/>
<text x="2569" y="1268" font-size="22" fill="#b9b5b5" textLength="41" lengthAdjust="spacingAndGlyphs">Hint</text>
<text x="2551" y="1314" font-size="22" fill="#2b2727" text-anchor="end" textLength="85" lengthAdjust="spacingAndGlyphs">Identifier</text>
<rect x="2562" y="1290.5" width="334" height="32.299999999999955" fill="#bdb8b8"/>
<rect x="2562" y="1290" width="334" height="32" fill="#ffffff" stroke="#e2dede" stroke-width="0.8"/>
<text x="2569" y="1314" font-size="22" fill="#b9b5b5" textLength="93" lengthAdjust="spacingAndGlyphs">Identifier</text>
<rect x="2408" y="1332" width="488" height="2" fill="#dcd8d8"/>
<text x="2551" y="1364" font-size="22" fill="#2b2727" text-anchor="end" textLength="52" lengthAdjust="spacingAndGlyphs">Traits</text>
<rect x="2562.5" y="1344.5" width="23.0" height="22.5" fill="#ffffff" stroke="#cbc6c6" stroke-width="1" rx="4.5"/>
<text x="2594" y="1364" font-size="22" fill="#2b2727" textLength="68" lengthAdjust="spacingAndGlyphs">Button</text>
<rect x="2562.5" y="1381.0" width="23.0" height="22.5" fill="#ffffff" stroke="#cbc6c6" stroke-width="1" rx="4.5"/>
<text x="2594" y="1400.5" font-size="22" fill="#2b2727" textLength="63" lengthAdjust="spacingAndGlyphs">Image</text>
<rect x="2562.5" y="1417.0" width="23.0" height="22.5" fill="#ffffff" stroke="#cbc6c6" stroke-width="1" rx="4.5"/>
<text x="2594" y="1436.5" font-size="22" fill="#2b2727" textLength="109" lengthAdjust="spacingAndGlyphs">Static Text</text>
<rect x="2562.5" y="1453.0" width="23.0" height="22.5" fill="#ffffff" stroke="#cbc6c6" stroke-width="1" rx="4.5"/>
<text x="2594" y="1472.5" font-size="22" fill="#2b2727" textLength="128" lengthAdjust="spacingAndGlyphs">Search Field</text>
<rect x="2562.5" y="1489.0" width="23.0" height="22.5" fill="#ffffff" stroke="#cbc6c6" stroke-width="1" rx="4.5"/>
<text x="2594" y="1508.5" font-size="22" fill="#2b2727" textLength="127" lengthAdjust="spacingAndGlyphs">Plays Sound</text>
<rect x="2562.5" y="1525.0" width="23.0" height="22.5" fill="#ffffff" stroke="#cbc6c6" stroke-width="1" rx="4.5"/>
<text x="2594" y="1544.5" font-size="22" fill="#2b2727" textLength="142" lengthAdjust="spacingAndGlyphs">Keyboard Key</text>
<rect x="2562.5" y="1561.0" width="23.0" height="22.5" fill="#ffffff" stroke="#cbc6c6" stroke-width="1" rx="4.5"/>
<text x="2594" y="1580.5" font-size="22" fill="#2b2727" textLength="188" lengthAdjust="spacingAndGlyphs">Summary Element</text>
<rect x="2562" y="1596.5" width="24" height="23.5" fill="#0a6eff" rx="4.5"/>
<path d="M2567.6 1608.5 L2572 1613.7 L2580.6 1602.1" fill="none" stroke="#fff" stroke-width="2.9" stroke-linecap="round" stroke-linejoin="round"/>
<text x="2594" y="1616.5" font-size="22" fill="#2b2727" textLength="257" lengthAdjust="spacingAndGlyphs">User Interaction Enabled</text>
<rect x="2562.5" y="1633.0" width="23.0" height="22.5" fill="#ffffff" stroke="#cbc6c6" stroke-width="1" rx="4.5"/>
<text x="2594" y="1652.5" font-size="22" fill="#2b2727" textLength="205" lengthAdjust="spacingAndGlyphs">Updates Frequently</text>
<rect x="2562.5" y="1669.0" width="23.0" height="22.5" fill="#ffffff" stroke="#cbc6c6" stroke-width="1" rx="4.5"/>
<text x="2594" y="1688.5" font-size="22" fill="#2b2727" textLength="220" lengthAdjust="spacingAndGlyphs">Starts Media Session</text>
<rect x="2562.5" y="1705.0" width="23.0" height="22.5" fill="#ffffff" stroke="#cbc6c6" stroke-width="1" rx="4.5"/>
<text x="2594" y="1724.5" font-size="22" fill="#2b2727" textLength="109" lengthAdjust="spacingAndGlyphs">Adjustable</text>
<rect x="2562.5" y="1741.0" width="23.0" height="22.5" fill="#ffffff" stroke="#cbc6c6" stroke-width="1" rx="4.5"/>
<text x="2594" y="1760.5" font-size="22" fill="#2b2727" textLength="255" lengthAdjust="spacingAndGlyphs">Allows Direct Interaction</text>
<rect x="2562.5" y="1777.0" width="23.0" height="22.5" fill="#ffffff" stroke="#cbc6c6" stroke-width="1" rx="4.5"/>
<text x="2594" y="1796.5" font-size="22" fill="#2b2727" textLength="188" lengthAdjust="spacingAndGlyphs">Causes Page Turn</text>
<rect x="2562.5" y="1813.0" width="23.0" height="22.5" fill="#ffffff" stroke="#cbc6c6" stroke-width="1" rx="4.5"/>
<text x="2594" y="1832.5" font-size="22" fill="#2b2727" textLength="76" lengthAdjust="spacingAndGlyphs">Header</text>
<rect x="2738.5" y="1344.5" width="23.0" height="22.5" fill="#ffffff" stroke="#cbc6c6" stroke-width="1" rx="4.5"/>
<text x="2771" y="1364" font-size="22" fill="#2b2727" textLength="42" lengthAdjust="spacingAndGlyphs">Link</text>
<rect x="2738.5" y="1381.0" width="23.0" height="22.5" fill="#ffffff" stroke="#cbc6c6" stroke-width="1" rx="4.5"/>
<text x="2771" y="1400.5" font-size="22" fill="#2b2727" textLength="91" lengthAdjust="spacingAndGlyphs">Selected</text>
<rect x="2408" y="1862" width="488" height="2" fill="#dcd8d8"/>
<rect x="112.5" y="76.5" width="2799.0" height="1799.0" fill="none" stroke="#ffffff" stroke-width="1.2" rx="20" opacity="0.75"/>
</svg></div></body></html>
